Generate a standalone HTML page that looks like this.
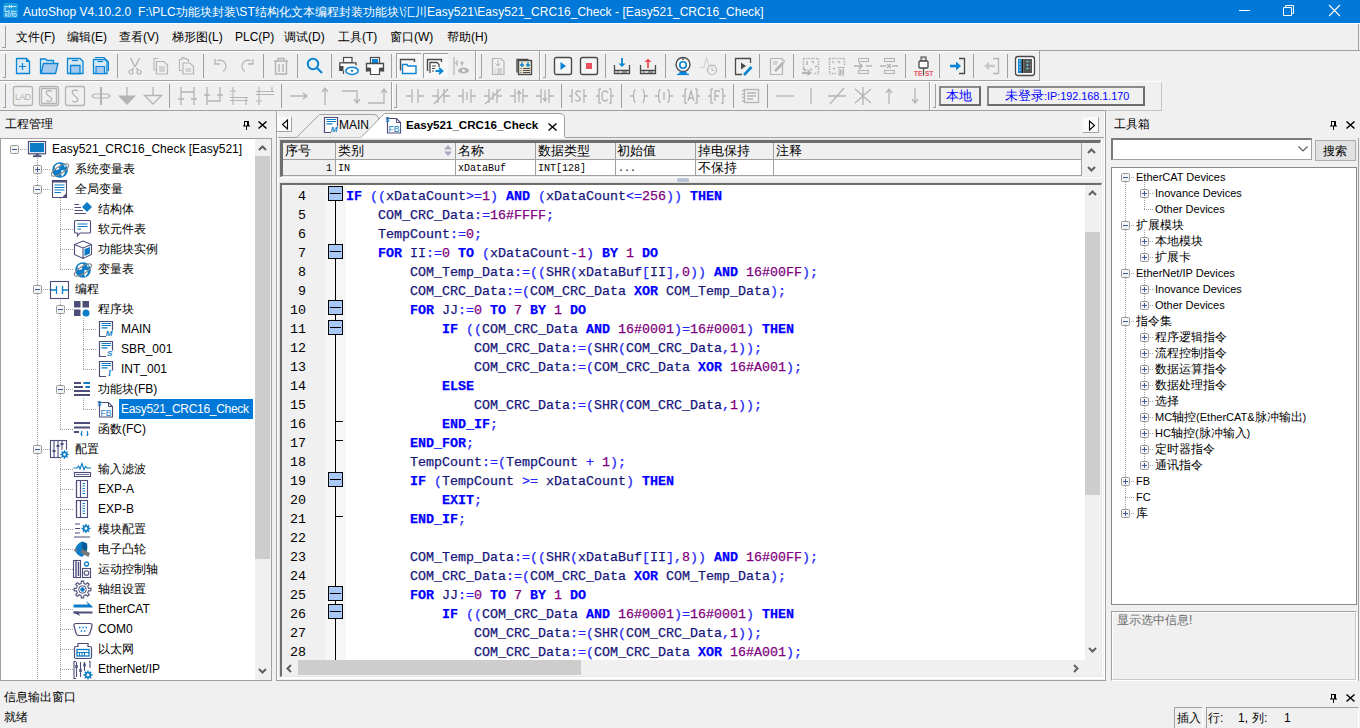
<!DOCTYPE html><html><head><meta charset="utf-8"><style>
*{box-sizing:border-box;margin:0;padding:0}
html,body{width:1360px;height:728px;overflow:hidden;background:#f0f0f0;font-family:"Liberation Sans",sans-serif;font-size:12px;color:#000;position:relative}
.a{position:absolute}
.t{position:absolute;white-space:nowrap;line-height:14px}
.mono{font-family:"Liberation Mono",monospace}
svg{position:absolute;overflow:visible}
</style></head><body><div class="a" style="left:0px;top:0px;width:1360px;height:23px;background:#0078d7"></div><div class="a" style="left:0px;top:23px;width:1360px;height:1px;background:#fff"></div><svg style="left:2px;top:2px" width="17" height="17" viewBox="0 0 17 17"><rect x="1" y="1" width="15" height="15" rx="2.5" fill="#1c9ae0"/><path d="M2.5 4.5H14.5M3 4.5V9.5H6.5M10.5 9.5H14.5M7 8V11M10 8V11M7.5 3V6M9.5 3V6" stroke="#bfe6fa" stroke-width="1" fill="none"/><text x="8.5" y="15" text-anchor="middle" font-size="4.5" font-weight="bold" font-family="Liberation Sans" fill="#d8f0fc">AUTO</text></svg><div class="t" style="left:23px;top:5px;color:#fff;letter-spacing:0.05px">AutoShop V4.10.2.0&nbsp; F:\PLC功能块封装\ST结构化文本编程封装功能块\汇川Easy521\Easy521_CRC16_Check - [Easy521_CRC16_Check]</div><div class="a" style="left:1239px;top:10px;width:11px;height:1px;background:#fff"></div><svg style="left:1283px;top:5px" width="11" height="11"><path d="M0.5 2.5h8v8h-8z M2.5 2.5v-2h8v8h-2" stroke="#fff" fill="none"/></svg><svg style="left:1329px;top:5px" width="11" height="11"><path d="M0 0L11 11M11 0L0 11" stroke="#fff" stroke-width="1.1" fill="none"/></svg><div class="a" style="left:0px;top:50px;width:1360px;height:1px;background:#a0a0a0"></div><div class="a" style="left:1358px;top:24px;width:1px;height:27px;background:#a0a0a0"></div><div class="a" style="left:5px;top:26px;width:1px;height:22px;background:#a0a0a0"></div><div class="a" style="left:2px;top:47px;width:4px;height:1px;background:#a0a0a0"></div><div class="t" style="left:16px;top:30px;">文件(F)</div><div class="t" style="left:67px;top:30px;">编辑(E)</div><div class="t" style="left:119px;top:30px;">查看(V)</div><div class="t" style="left:172px;top:30px;">梯形图(L)</div><div class="t" style="left:235px;top:30px;">PLC(P)</div><div class="t" style="left:284px;top:30px;">调试(D)</div><div class="t" style="left:338px;top:30px;">工具(T)</div><div class="t" style="left:390px;top:30px;">窗口(W)</div><div class="t" style="left:447px;top:30px;">帮助(H)</div><div class="a" style="left:0px;top:51px;width:1040px;height:1px;background:#fff"></div><div class="a" style="left:0px;top:80px;width:1040px;height:1px;background:#a0a0a0"></div><div class="a" style="left:0px;top:81px;width:1162px;height:1px;background:#fff"></div><div class="a" style="left:0px;top:110px;width:1106px;height:1px;background:#a0a0a0"></div><div class="a" style="left:1039px;top:51px;width:1px;height:29px;background:#a0a0a0"></div><div class="a" style="left:475px;top:51px;width:1px;height:29px;background:#a0a0a0"></div><div class="a" style="left:476px;top:51px;width:1px;height:29px;background:#fff"></div><div class="a" style="left:539px;top:51px;width:1px;height:29px;background:#a0a0a0"></div><div class="a" style="left:540px;top:51px;width:1px;height:29px;background:#fff"></div><div class="a" style="left:5px;top:54px;width:1px;height:24px;background:#a0a0a0"></div><div class="a" style="left:3px;top:77px;width:3px;height:1px;background:#a0a0a0"></div><div class="a" style="left:481px;top:54px;width:1px;height:24px;background:#a0a0a0"></div><div class="a" style="left:479px;top:77px;width:3px;height:1px;background:#a0a0a0"></div><div class="a" style="left:545px;top:54px;width:1px;height:24px;background:#a0a0a0"></div><div class="a" style="left:543px;top:77px;width:3px;height:1px;background:#a0a0a0"></div><div class="a" style="left:117px;top:54px;width:1px;height:24px;background:#a0a0a0"></div><div class="a" style="left:203px;top:54px;width:1px;height:24px;background:#a0a0a0"></div><div class="a" style="left:263px;top:54px;width:1px;height:24px;background:#a0a0a0"></div><div class="a" style="left:297px;top:54px;width:1px;height:24px;background:#a0a0a0"></div><div class="a" style="left:331px;top:54px;width:1px;height:24px;background:#a0a0a0"></div><div class="a" style="left:391px;top:54px;width:1px;height:24px;background:#a0a0a0"></div><div class="a" style="left:605px;top:54px;width:1px;height:24px;background:#a0a0a0"></div><div class="a" style="left:665px;top:54px;width:1px;height:24px;background:#a0a0a0"></div><div class="a" style="left:725px;top:54px;width:1px;height:24px;background:#a0a0a0"></div><div class="a" style="left:759px;top:54px;width:1px;height:24px;background:#a0a0a0"></div><div class="a" style="left:793px;top:54px;width:1px;height:24px;background:#a0a0a0"></div><div class="a" style="left:905px;top:54px;width:1px;height:24px;background:#a0a0a0"></div><div class="a" style="left:939px;top:54px;width:1px;height:24px;background:#a0a0a0"></div><div class="a" style="left:973px;top:54px;width:1px;height:24px;background:#a0a0a0"></div><div class="a" style="left:1007px;top:54px;width:1px;height:24px;background:#a0a0a0"></div><div class="a" style="left:929px;top:82px;width:1px;height:28px;background:#a0a0a0"></div><div class="a" style="left:930px;top:82px;width:1px;height:28px;background:#fff"></div><div class="a" style="left:391px;top:82px;width:1px;height:28px;background:#a0a0a0"></div><div class="a" style="left:392px;top:82px;width:1px;height:28px;background:#fff"></div><div class="a" style="left:1161px;top:81px;width:1px;height:30px;background:#c4c4c4"></div><div class="a" style="left:1106px;top:110px;width:56px;height:1px;background:#c4c4c4"></div><div class="a" style="left:5px;top:84px;width:1px;height:24px;background:#a0a0a0"></div><div class="a" style="left:3px;top:107px;width:3px;height:1px;background:#a0a0a0"></div><div class="a" style="left:396px;top:84px;width:1px;height:24px;background:#a0a0a0"></div><div class="a" style="left:394px;top:107px;width:3px;height:1px;background:#a0a0a0"></div><div class="a" style="left:935px;top:84px;width:1px;height:24px;background:#a0a0a0"></div><div class="a" style="left:933px;top:107px;width:3px;height:1px;background:#a0a0a0"></div><div class="a" style="left:169px;top:84px;width:1px;height:24px;background:#a0a0a0"></div><div class="a" style="left:281px;top:84px;width:1px;height:24px;background:#a0a0a0"></div><div class="a" style="left:561px;top:84px;width:1px;height:24px;background:#a0a0a0"></div><div class="a" style="left:621px;top:84px;width:1px;height:24px;background:#a0a0a0"></div><div class="a" style="left:733px;top:84px;width:1px;height:24px;background:#a0a0a0"></div><div class="a" style="left:767px;top:84px;width:1px;height:24px;background:#a0a0a0"></div><svg style="left:13px;top:56px" width="20" height="20" viewBox="0 0 20 20"><path d="M3.5 2.5H13.5L16.5 5.5V17.5H3.5Z" fill="#d8e9f6" stroke="#0a84d4" stroke-width="1.3"/><path d="M13 2.5L16.5 6H13Z" fill="#0a84d4"/><path d="M6 10.5H13M9.5 7V14" stroke="#0a84d4" stroke-width="1.2"/></svg><svg style="left:39px;top:56px" width="20" height="20" viewBox="0 0 20 20"><path d="M1.5 17.5V3H6.5L8 4.5H14.5V7" fill="#d8e9f6" stroke="#0a84d4" stroke-width="1.3"/><path d="M2 17.5L4.5 7.5H19L16.5 17.5Z" fill="#a3c9ef" stroke="#0a84d4" stroke-width="1.3"/></svg><svg style="left:65px;top:56px" width="20" height="20" viewBox="0 0 20 20"><path d="M2.5 2.5H15L18 5.5V17.5H2.5Z" fill="#d8e9f6" stroke="#0a84d4" stroke-width="1.3"/><path d="M5.5 9.5H15V17.5H5.5Z" fill="#a3c9ef" stroke="#0a84d4" stroke-width="1.3"/><path d="M7 4.5H13" stroke="#0a84d4" stroke-width="1.2"/></svg><svg style="left:91px;top:56px" width="20" height="20" viewBox="0 0 20 20"><path d="M4 1.5H13L17.5 6V15" fill="none" stroke="#0a84d4" stroke-width="1.1"/><path d="M2.5 3.5H14L16 5.5V17.5H2.5Z" fill="#d8e9f6" stroke="#0a84d4" stroke-width="1.3"/><path d="M5 10.5H13.5V17.5H5Z" fill="#a3c9ef" stroke="#0a84d4" stroke-width="1.2"/><path d="M6.5 5.5H12" stroke="#0a84d4" stroke-width="1.2"/></svg><svg style="left:125px;top:56px" width="20" height="20" viewBox="0 0 20 20"><path d="M5.5 2L10 11M14.5 2L10 11M8.5 12L7 14M11.5 12L13 14" stroke="#b4b4b4" stroke-width="1.4" fill="none"/><circle cx="6" cy="16" r="2" fill="none" stroke="#b4b4b4" stroke-width="1.2"/><circle cx="14" cy="16" r="2" fill="none" stroke="#b4b4b4" stroke-width="1.2"/></svg><svg style="left:151px;top:56px" width="20" height="20" viewBox="0 0 20 20"><path d="M7 2.5H3V14H5" fill="none" stroke="#b4b4b4" stroke-width="1.1"/><path d="M5.5 5.5H13L16.5 9V18H5.5Z" fill="none" stroke="#b4b4b4" stroke-width="1.2"/><path d="M8 11H14M8 13H14M8 15H14" stroke="#b4b4b4"/></svg><svg style="left:177px;top:56px" width="20" height="20" viewBox="0 0 20 20"><path d="M9 3.5V2.5H7V1.5H5V3.5H2.5V14.5H5M9 3.5H11.5V6" fill="none" stroke="#b4b4b4" stroke-width="1.1"/><path d="M6 7H13L16.5 10.5V18H6Z" fill="none" stroke="#b4b4b4" stroke-width="1.2"/><path d="M8.5 13H14M8.5 15H14" stroke="#b4b4b4"/></svg><svg style="left:211px;top:56px" width="20" height="20" viewBox="0 0 20 20"><path d="M6 5A5 5 0 1 1 12 15.5" fill="none" stroke="#b4b4b4" stroke-width="1.3"/><path d="M4 3V8H9" fill="none" stroke="#b4b4b4" stroke-width="1.3"/></svg><svg style="left:237px;top:56px" width="20" height="20" viewBox="0 0 20 20"><path d="M14 5A5 5 0 1 0 8 15.5" fill="none" stroke="#b4b4b4" stroke-width="1.3"/><path d="M16 3V8H11" fill="none" stroke="#b4b4b4" stroke-width="1.3"/></svg><svg style="left:271px;top:56px" width="20" height="20" viewBox="0 0 20 20"><path d="M3 5H17M7 5V2.5H13V5M4.5 5.5V18H15.5V5.5M8 8V16M12 8V16" fill="none" stroke="#b4b4b4" stroke-width="1.4"/></svg><svg style="left:305px;top:56px" width="20" height="20" viewBox="0 0 20 20"><circle cx="8" cy="8" r="5.2" fill="none" stroke="#0a84d4" stroke-width="2"/><path d="M11.8 11.8L17 17" stroke="#0a84d4" stroke-width="2.2"/></svg><svg style="left:339px;top:56px" width="20" height="20" viewBox="0 0 20 20"><rect x="4.5" y="1.5" width="8.5" height="5" fill="#fff" stroke="#4a4a4a" stroke-width="1.2"/><path d="M0.8 15V6.8H17V9.5" fill="#fff" stroke="#4a4a4a" stroke-width="1.3"/><rect x="0.5" y="10" width="4" height="5" fill="#4a4a4a"/><path d="M4.5 15V18" stroke="#4a4a4a" stroke-width="1.2"/><ellipse cx="13" cy="14.8" rx="6.2" ry="3.6" fill="#fff" stroke="#0a84d4" stroke-width="1.5"/><rect x="12" y="13.8" width="2" height="2" fill="#0a84d4"/></svg><svg style="left:365px;top:56px" width="20" height="20" viewBox="0 0 20 20"><rect x="5.5" y="1.5" width="9" height="6" fill="#fff" stroke="#4a4a4a" stroke-width="1.2"/><rect x="7" y="3" width="6" height="4.5" fill="#0a84d4"/><path d="M1.5 15.5V7.5H18.5V15.5" fill="#fff" stroke="#4a4a4a" stroke-width="1.3"/><rect x="1" y="11.5" width="4" height="4" fill="#4a4a4a"/><rect x="15" y="11.5" width="4" height="4" fill="#4a4a4a"/><path d="M5.5 12V18.5H14.5V12" fill="#fff" stroke="#4a4a4a" stroke-width="1.2"/></svg><svg style="left:451px;top:56px" width="20" height="20" viewBox="0 0 20 20"><path d="M3 1V19M3 7H6M6 4V10M11 5V10M9 7H13" stroke="#b4b4b4" stroke-width="1.2" fill="none"/><ellipse cx="12.5" cy="14.5" rx="5.5" ry="3" fill="#b4b4b4"/><circle cx="12.5" cy="14.5" r="1.5" fill="#f0f0f0"/></svg><svg style="left:488px;top:56px" width="20" height="20" viewBox="0 0 20 20"><path d="M4.5 2.5H13L16 5.5V18.5H4.5Z" fill="none" stroke="#b4b4b4" stroke-width="1.2"/><path d="M10 4V10M7.5 7.5L10 10L12.5 7.5M6.5 13H7.5M9 13H14M6.5 15H7.5M9 15H14M6.5 17H7.5M9 17H14" fill="none" stroke="#b4b4b4"/></svg><svg style="left:514px;top:56px" width="20" height="20" viewBox="0 0 20 20"><path d="M3 16.5V3.5H14.5" fill="none" stroke="#4a4a4a" stroke-width="1.4"/><rect x="4.5" y="4.5" width="13" height="14" fill="#efe7cf" stroke="#4a4a4a" stroke-width="1.4"/><path d="M8 6V10M6.3 8.5L8 10.3L9.7 8.5M14 6V10M12.3 8.5L14 10.3L15.7 8.5" fill="none" stroke="#0a84d4" stroke-width="1.3"/><path d="M6.5 12.5H7.5M9 12.5H16M6.5 14.5H7.5M9 14.5H16M6.5 16.5H7.5M9 16.5H16" stroke="#4a4a4a"/></svg><svg style="left:553px;top:56px" width="20" height="20" viewBox="0 0 20 20"><rect x="1.5" y="1.5" width="17" height="17" rx="2" fill="#f6f6f6" stroke="#4a4a4a" stroke-width="1.4"/><path d="M7.5 6L13 10L7.5 14Z" fill="#0a84d4"/></svg><svg style="left:579px;top:56px" width="20" height="20" viewBox="0 0 20 20"><rect x="1.5" y="1.5" width="17" height="17" rx="2" fill="#f6f6f6" stroke="#4a4a4a" stroke-width="1.4"/><rect x="7" y="7" width="6" height="6" fill="#e8505b"/></svg><svg style="left:612px;top:56px" width="20" height="20" viewBox="0 0 20 20"><path d="M2.5 9V17.5H17.5V9M3 14.5H17" fill="none" stroke="#4a4a4a" stroke-width="1.3"/><path d="M5 16H6.5M10 16H15" stroke="#4a4a4a"/><path d="M10 2V9" stroke="#0a84d4" stroke-width="1.8"/><path d="M6.5 7.5L10 11L13.5 7.5Z" fill="#0a84d4"/></svg><svg style="left:638px;top:56px" width="20" height="20" viewBox="0 0 20 20"><path d="M2.5 9V17.5H17.5V9M3 14.5H17" fill="none" stroke="#4a4a4a" stroke-width="1.3"/><path d="M5 16H6.5M10 16H15" stroke="#4a4a4a"/><path d="M10 5V12" stroke="#e8505b" stroke-width="1.8"/><path d="M6.5 6L10 2.5L13.5 6Z" fill="#e8505b"/></svg><svg style="left:673px;top:56px" width="20" height="20" viewBox="0 0 20 20"><circle cx="10" cy="8.5" r="7" fill="#f6f6f6" stroke="#4a4a4a" stroke-width="1.4"/><circle cx="10" cy="9" r="3.2" fill="none" stroke="#0a84d4" stroke-width="1.6"/><circle cx="10" cy="3.2" r="0.9" fill="#4a4a4a"/><path d="M7 15.5L5.5 18H14.5L13 15.5Z" fill="#0a84d4"/><path d="M4 18.5H16" stroke="#0a84d4" stroke-width="1.2"/></svg><svg style="left:699px;top:56px" width="20" height="20" viewBox="0 0 20 20"><path d="M1 12L5 11L7.5 2L9.5 9H17" fill="none" stroke="#cfcfcf" stroke-width="1.1"/><circle cx="13" cy="14" r="4.5" fill="#f0f0f0" stroke="#b4b4b4" stroke-width="1.2"/><path d="M13 11.5V14.5H15" fill="none" stroke="#b4b4b4"/></svg><svg style="left:733px;top:56px" width="20" height="20" viewBox="0 0 20 20"><path d="M17.5 7V2.5H2.5V18.5H9" fill="none" stroke="#4a4a4a" stroke-width="1.3"/><path d="M8 6.5L13 10L8 13.5Z" fill="#4a4a4a"/><path d="M11 19L18.5 11" stroke="#0a84d4" stroke-width="2.6"/></svg><svg style="left:767px;top:56px" width="20" height="20" viewBox="0 0 20 20"><path d="M15 2.5H3.5V18.5H15.5V8" fill="none" stroke="#b4b4b4" stroke-width="1.2"/><path d="M6 6H11M6 8H10" stroke="#b4b4b4"/><path d="M8 15L16.5 6.5" stroke="#b4b4b4" stroke-width="2.6"/><path d="M14 2L18 6" stroke="#b4b4b4" stroke-width="1.2"/></svg><svg style="left:801px;top:56px" width="20" height="20" viewBox="0 0 20 20"><path d="M2.5 2.5H17.5V17.5H12M2.5 2.5V12" fill="none" stroke="#b4b4b4" stroke-width="1.6" stroke-dasharray="1.5 1"/><path d="M5 6H7M5 8H7M11 5L13 7M14 11L16 10M9 13L11 14" stroke="#b4b4b4" stroke-width="1.5"/><path d="M1 17H9" stroke="#b4b4b4" stroke-width="2.2"/><path d="M6.5 13L11 17L6.5 20Z" fill="#b4b4b4"/><path d="M2 12L5 15" stroke="#b4b4b4" stroke-width="2"/></svg><svg style="left:827px;top:56px" width="20" height="20" viewBox="0 0 20 20"><path d="M2.5 2.5H17.5V10M2.5 2.5V17.5H9" fill="none" stroke="#b4b4b4" stroke-width="1.6" stroke-dasharray="1.5 1"/><path d="M5 6H7M11 5L13 7M6 12L8 13" stroke="#b4b4b4" stroke-width="1.5"/><path d="M10.5 11.5H18M12 12.5V19H16.5V12.5M13.5 13.5V18M15 13.5V18" fill="none" stroke="#b4b4b4" stroke-width="1.1"/></svg><svg style="left:853px;top:56px" width="20" height="20" viewBox="0 0 20 20"><rect x="5.5" y="2.5" width="10" height="3" fill="none" stroke="#b4b4b4" stroke-width="1.1"/><rect x="5.5" y="14.5" width="10" height="3" fill="none" stroke="#b4b4b4" stroke-width="1.1"/><path d="M1 10H9M13 10H19M6 7L9 10L6 13" fill="none" stroke="#b4b4b4" stroke-width="1.6"/></svg><svg style="left:879px;top:56px" width="20" height="20" viewBox="0 0 20 20"><rect x="5.5" y="2.5" width="10" height="3" fill="none" stroke="#b4b4b4" stroke-width="1.1"/><rect x="5.5" y="14.5" width="10" height="3" fill="none" stroke="#b4b4b4" stroke-width="1.1"/><path d="M1 10H7M13 10H19M8 8L12 12M12 8L8 12" fill="none" stroke="#b4b4b4" stroke-width="1.4"/></svg><svg style="left:914px;top:56px" width="20" height="20" viewBox="0 0 20 20"><rect x="7" y="1" width="5" height="4" fill="none" stroke="#4a4a4a" stroke-width="1.1"/><path d="M8.5 2.5H9M10 2.5H10.5" stroke="#4a4a4a"/><rect x="5" y="5" width="9" height="7" rx="1" fill="#fff" stroke="#4a4a4a" stroke-width="1.3"/><path d="M9.5 12V19.5" stroke="#4a4a4a" stroke-width="1.2"/><text x="0" y="19.5" font-size="6.5" font-family="Liberation Sans" font-weight="bold" fill="#e8505b">TE</text><text x="11" y="19.5" font-size="6.5" font-family="Liberation Sans" font-weight="bold" fill="#e8505b">ST</text></svg><svg style="left:948px;top:56px" width="20" height="20" viewBox="0 0 20 20"><path d="M11 2.5H16.5V17.5H11" fill="none" stroke="#4a4a4a" stroke-width="1.3"/><path d="M2 10H9" stroke="#0a84d4" stroke-width="2.6"/><path d="M8 5.5L13 10L8 14.5Z" fill="#0a84d4"/></svg><svg style="left:982px;top:56px" width="20" height="20" viewBox="0 0 20 20"><path d="M11 2.5H16.5V17.5H11" fill="none" stroke="#b4b4b4" stroke-width="1.3"/><path d="M6 10H13" stroke="#c8c8c8" stroke-width="2.6"/><path d="M7 5.5L2 10L7 14.5Z" fill="#c8c8c8"/></svg><svg style="left:1015px;top:56px" width="20" height="20" viewBox="0 0 20 20"><rect x="0.5" y="0.5" width="19" height="19" rx="2.5" fill="#f8f8f8" stroke="#4a4a4a" stroke-width="1.3"/><rect x="3" y="3" width="3.5" height="14" fill="#0a84d4"/><rect x="6.5" y="3" width="2" height="14" fill="#1a1a1a"/><rect x="8.5" y="3" width="8.5" height="14" fill="#555"/><path d="M4 5H5.5M4 8H5.5M4 11H5.5M4 14H5.5" stroke="#cfe8f8" stroke-width="1"/><circle cx="12.5" cy="5.5" r="1" fill="#5fd0e0"/><circle cx="12.5" cy="9" r="1" fill="#5fd0e0"/><circle cx="12.5" cy="12.5" r="1" fill="#5fd0e0"/><path d="M15 5.5H16M15 9H16M15 12.5H16" stroke="#999"/></svg><div class="a" style="left:396px;top:53px;width:25px;height:25px;background:#f7f7f7;border-top:1px solid #a0a0a0;border-left:1px solid #a0a0a0"></div><svg style="left:398px;top:56px" width="20" height="20" viewBox="0 0 20 20"><path d="M2.5 14.5V3.5H16.5V6" fill="none" stroke="#4a4a4a" stroke-width="1.4"/><path d="M4.5 17.5V8.5H9L10 10H18V17.5Z" fill="#fff" stroke="#0a84d4" stroke-width="1.4"/></svg><div class="a" style="left:423px;top:53px;width:25px;height:25px;background:#f7f7f7;border-top:1px solid #a0a0a0;border-left:1px solid #a0a0a0"></div><svg style="left:425px;top:56px" width="20" height="20" viewBox="0 0 20 20"><path d="M2.5 15V3.5H16.5V6" fill="none" stroke="#4a4a4a" stroke-width="1.4"/><path d="M5 17V6.5H12L14 8.5V11" fill="#fff" stroke="#4a4a4a" stroke-width="1.3"/><path d="M7 10H11M7 12.5H10M7 15H9" stroke="#4a4a4a"/><path d="M10.5 15H16M14 12L17.5 15L14 18" fill="none" stroke="#0a84d4" stroke-width="1.8"/></svg><svg style="left:13px;top:86px" width="20" height="20" viewBox="0 0 20 20"><rect x="0.5" y="0.5" width="19" height="19" rx="2" stroke="#b4b4b4" stroke-width="1.3" fill="none"/><text x="10" y="14" text-anchor="middle" font-size="9" font-family="Liberation Sans" fill="#b4b4b4" textLength="16">LAD</text></svg><svg style="left:39px;top:86px" width="20" height="20" viewBox="0 0 20 20"><rect x="0.5" y="0.5" width="19" height="19" rx="2" stroke="#b4b4b4" stroke-width="1.3" fill="none"/><rect x="2.5" y="2.5" width="15" height="15" rx="1" stroke="#b4b4b4" stroke-width="1.3" fill="none"/><path d="M13 5.5Q10 3.5 7.5 5.5Q6.5 7.5 10 10Q13.5 12.5 12.5 14.5Q10 16.5 7 14.5" stroke="#b4b4b4" stroke-width="1.3" fill="none"/></svg><svg style="left:65px;top:86px" width="20" height="20" viewBox="0 0 20 20"><rect x="0.5" y="0.5" width="19" height="19" rx="2" stroke="#b4b4b4" stroke-width="1.3" fill="none"/><path d="M13 5Q10 3 7.5 5Q6.5 7.5 10 10Q13.5 12.5 12.5 15Q10 17 7 15" stroke="#b4b4b4" stroke-width="1.3" fill="none"/></svg><svg style="left:91px;top:86px" width="20" height="20" viewBox="0 0 20 20"><path d="M10 1V19" stroke="#b4b4b4" stroke-width="2"/><path d="M1 10L3 8H17L19 10L17 12H3Z" fill="#f0f0f0" stroke="#b4b4b4" stroke-width="1.2"/><path d="M10 7V13" stroke="#b4b4b4" stroke-width="2"/></svg><svg style="left:117px;top:86px" width="20" height="20" viewBox="0 0 20 20"><path d="M10 1V10" stroke="#b4b4b4" stroke-width="1.3" fill="none"/><path d="M1 9.5H19L10 19Z" fill="#b4b4b4"/></svg><svg style="left:143px;top:86px" width="20" height="20" viewBox="0 0 20 20"><path d="M10 1V9" stroke="#b4b4b4" stroke-width="1.3" fill="none"/><path d="M1.5 9.5H18.5L10 18Z" stroke="#b4b4b4" stroke-width="1.3" fill="none"/></svg><svg style="left:177px;top:86px" width="20" height="20" viewBox="0 0 20 20"><path d="M4 1V19M17 1V19M4 6H17V19M1 13H7M14 13H20" stroke="#b4b4b4" stroke-width="1.3" fill="none"/></svg><svg style="left:203px;top:86px" width="20" height="20" viewBox="0 0 20 20"><path d="M4 1V19M17 1V15H4M1 9H7M14 9H20" stroke="#b4b4b4" stroke-width="1.3" fill="none"/></svg><svg style="left:229px;top:86px" width="20" height="20" viewBox="0 0 20 20"><path d="M4 1V19M17 12V19M1 5H7M1 11.5H19M1 14.5H19M1 8.5H2" stroke="#b4b4b4" stroke-width="1.1" fill="none"/></svg><svg style="left:255px;top:86px" width="20" height="20" viewBox="0 0 20 20"><path d="M4 1V19M17 1V6M1 5.5H19M1 8.5H19M1 15H7" stroke="#b4b4b4" stroke-width="1.1" fill="none"/></svg><svg style="left:289px;top:86px" width="20" height="20" viewBox="0 0 20 20"><path d="M1 10H18M14 7L18 10L14 13" stroke="#b4b4b4" stroke-width="1.3" fill="none"/></svg><svg style="left:315px;top:86px" width="20" height="20" viewBox="0 0 20 20"><path d="M10 19V2M7 6L10 2L13 6" stroke="#b4b4b4" stroke-width="1.3" fill="none"/></svg><svg style="left:341px;top:86px" width="20" height="20" viewBox="0 0 20 20"><path d="M1 5H16V16M13 13L16 17L19 13" stroke="#b4b4b4" stroke-width="1.3" fill="none"/></svg><svg style="left:367px;top:86px" width="20" height="20" viewBox="0 0 20 20"><path d="M1 17H17V4M14 7L17 3L20 7" stroke="#b4b4b4" stroke-width="1.3" fill="none"/></svg><svg style="left:405px;top:86px" width="20" height="20" viewBox="0 0 20 20"><path d="M1 10H7M7 3V17M13 3V17M13 10H19" stroke="#b4b4b4" stroke-width="1.3" fill="none"/></svg><svg style="left:431px;top:86px" width="20" height="20" viewBox="0 0 20 20"><path d="M1 10H7M7 3V17M13 3V17M13 10H19M3 18L17 3" stroke="#b4b4b4" stroke-width="1.3" fill="none"/></svg><svg style="left:457px;top:86px" width="20" height="20" viewBox="0 0 20 20"><path d="M1 10H6M6 3V17M14 3V17M14 10H19M10 6V14" stroke="#b4b4b4" stroke-width="1.3" fill="none"/></svg><svg style="left:483px;top:86px" width="20" height="20" viewBox="0 0 20 20"><path d="M1 10H6M6 3V17M14 3V17M14 10H19M10 6V14M2 18L18 3" stroke="#b4b4b4" stroke-width="1.3" fill="none"/></svg><svg style="left:509px;top:86px" width="20" height="20" viewBox="0 0 20 20"><path d="M1 10H6M6 3V17M14 3V17M14 10H19M10 16V5M8 8L10 5L12 8" stroke="#b4b4b4" stroke-width="1.3" fill="none"/></svg><svg style="left:535px;top:86px" width="20" height="20" viewBox="0 0 20 20"><path d="M1 10H6M6 3V17M14 3V17M14 10H19M10 4V15M8 12L10 15L12 12" stroke="#b4b4b4" stroke-width="1.3" fill="none"/></svg><svg style="left:568px;top:86px" width="20" height="20" viewBox="0 0 20 20"><path d="M1 10H4M4 3V17M16 3V17M16 10H19M13 6Q10 4 8 6Q7 8 10 10Q13 12 12 14Q10 16 7 14" stroke="#b4b4b4" stroke-width="1.3" fill="none"/></svg><svg style="left:595px;top:86px" width="20" height="20" viewBox="0 0 20 20"><path d="M1 10H4M4 3H6M4 3V17H6M16 3H14M16 3V17H14M16 10H19M13 7Q12 5 10 5Q7 5 7 10Q7 15 10 15Q12 15 13 13" stroke="#b4b4b4" stroke-width="1.3" fill="none"/></svg><svg style="left:629px;top:86px" width="20" height="20" viewBox="0 0 20 20"><path d="M1 10H4M6 3Q3 10 6 17M14 3Q17 10 14 17M16 10H19" stroke="#b4b4b4" stroke-width="1.3" fill="none"/></svg><svg style="left:654px;top:86px" width="20" height="20" viewBox="0 0 20 20"><path d="M1 10H4M6 3Q3 10 6 17M14 3Q17 10 14 17M16 10H19M10 6V14" stroke="#b4b4b4" stroke-width="1.3" fill="none"/></svg><svg style="left:681px;top:86px" width="20" height="20" viewBox="0 0 20 20"><path d="M1 10H4M4 3H6M4 3V17H6M16 3H14M16 3V17H14M16 10H19M7 15L10 5L13 15M8 12H12" stroke="#b4b4b4" stroke-width="1.3" fill="none"/></svg><svg style="left:707px;top:86px" width="20" height="20" viewBox="0 0 20 20"><path d="M1 10H4M4 3H6M4 3V17H6M16 3H14M16 3V17H14M16 10H19M8 15V5H13M8 10H12" stroke="#b4b4b4" stroke-width="1.3" fill="none"/></svg><svg style="left:740px;top:86px" width="20" height="20" viewBox="0 0 20 20"><path d="M2 4.5H4M2 8H4M2 11.5H4M2 15H4" stroke="#b4b4b4" stroke-width="1.3" fill="none"/><rect x="4.5" y="3.5" width="14" height="13" stroke="#b4b4b4" stroke-width="1.3" fill="none"/><path d="M7 7H16M7 10H16M7 13H13" stroke="#b4b4b4" stroke-width="1.3" fill="none"/></svg><svg style="left:775px;top:86px" width="20" height="20" viewBox="0 0 20 20"><path d="M1 10H19" stroke="#b4b4b4" stroke-width="1.3" fill="none"/></svg><svg style="left:801px;top:86px" width="20" height="20" viewBox="0 0 20 20"><path d="M10 2V18" stroke="#b4b4b4" stroke-width="1.3" fill="none"/></svg><svg style="left:827px;top:86px" width="20" height="20" viewBox="0 0 20 20"><path d="M1 10H19M3 18L17 2" stroke="#b4b4b4" stroke-width="1.3" fill="none"/></svg><svg style="left:853px;top:86px" width="20" height="20" viewBox="0 0 20 20"><path d="M10 1V19M2 3L18 17M18 3L2 17" stroke="#b4b4b4" stroke-width="1.3" fill="none"/></svg><svg style="left:879px;top:86px" width="20" height="20" viewBox="0 0 20 20"><path d="M10 18V3M7 7L10 3L13 7" stroke="#b4b4b4" stroke-width="1.3" fill="none"/></svg><svg style="left:905px;top:86px" width="20" height="20" viewBox="0 0 20 20"><path d="M10 2V17M7 13L10 17L13 13" stroke="#b4b4b4" stroke-width="1.3" fill="none"/></svg><div class="a" style="left:930px;top:81px;width:232px;height:1px;background:#fff"></div><div class="a" style="left:939px;top:86px;width:42px;height:20px;border:2px solid #6b6b6b;border-top-color:#8a8a8a;border-left-color:#8a8a8a;background:#f0f0f0"></div><div class="t" style="left:946px;top:89px;color:#0000ff;font-size:13px">本地</div><div class="a" style="left:987px;top:86px;width:158px;height:20px;border:2px solid #6b6b6b;border-top-color:#8a8a8a;border-left-color:#8a8a8a;background:#f0f0f0"></div><div class="t" style="left:1005px;top:89px;color:#0000ff;font-size:13px">未登录<span style="font-size:10.8px">:IP:192.168.1.170</span></div><div class="t" style="left:5px;top:117px;">工程管理</div><svg style="left:242px;top:121px" width="9" height="9" viewBox="0 0 9 9"><path d="M2 0.5H7M2.5 0.5V5M6.5 0.5V5M5.5 0.5V5M1 5H8M4.5 5V9" stroke="#000" stroke-width="1" fill="none"/></svg><svg style="left:258px;top:121px" width="9" height="8" viewBox="0 0 9 8"><path d="M0.5 0.5L8.5 7.5M8.5 0.5L0.5 7.5" stroke="#000" stroke-width="1.5" fill="none"/></svg><div class="a" style="left:0px;top:138px;width:272px;height:543px;border:1px solid #a0a0a0;background:#fff"></div><div class="a" style="left:255px;top:139px;width:16px;height:541px;background:#f0f0f0"></div><div class="a" style="left:255px;top:156px;width:15px;height:403px;background:#cdcdcd"></div><svg style="left:258px;top:145px" width="9" height="6" viewBox="0 0 9 6"><path d="M1 5L4.5 1.5L8 5" stroke="#606060" stroke-width="2" fill="none"/></svg><svg style="left:258px;top:668px" width="9" height="6" viewBox="0 0 9 6"><path d="M1 1L4.5 4.5L8 1" stroke="#606060" stroke-width="2" fill="none"/></svg><div class="a" style="left:276px;top:111px;width:1px;height:570px;background:#a0a0a0"></div><div class="a" style="left:277px;top:111px;width:1px;height:570px;background:#fff"></div><div class="a" style="left:1px;top:139px;width:254px;height:541px;overflow:hidden"><div class="a" style="left:36px;top:19px;width:1px;height:522px;background:repeating-linear-gradient(to bottom,#a0a0a0 0 1px,transparent 1px 2px)"></div><div class="a" style="left:59px;top:59px;width:1px;height:72px;background:repeating-linear-gradient(to bottom,#a0a0a0 0 1px,transparent 1px 2px)"></div><div class="a" style="left:59px;top:159px;width:1px;height:132px;background:repeating-linear-gradient(to bottom,#a0a0a0 0 1px,transparent 1px 2px)"></div><div class="a" style="left:82px;top:179px;width:1px;height:52px;background:repeating-linear-gradient(to bottom,#a0a0a0 0 1px,transparent 1px 2px)"></div><div class="a" style="left:82px;top:259px;width:1px;height:12px;background:repeating-linear-gradient(to bottom,#a0a0a0 0 1px,transparent 1px 2px)"></div><div class="a" style="left:59px;top:319px;width:1px;height:222px;background:repeating-linear-gradient(to bottom,#a0a0a0 0 1px,transparent 1px 2px)"></div><div class="a" style="left:13px;top:10px;width:14px;height:1px;background:repeating-linear-gradient(to right,#a0a0a0 0 1px,transparent 1px 2px)"></div><svg style="left:9px;top:6px" width="9" height="9" viewBox="0 0 9 9"><rect x="0.5" y="0.5" width="8" height="8" rx="1" fill="#f4f4f4" stroke="#9a9a9a"/><path d="M2 4.5H7" stroke="#3c5a9a" stroke-width="1"/></svg><svg style="left:26px;top:1px" width="20" height="20" viewBox="0 0 20 20"><rect x="1.5" y="1.5" width="17" height="12.3" fill="#fff" stroke="#4d4d7a" stroke-width="1.2"/><rect x="3" y="3" width="14" height="9.2" fill="#0b7cc5"/><rect x="8.5" y="14" width="3.5" height="1.5" fill="#4d4d7a"/><rect x="6" y="15.3" width="8.5" height="1.8" fill="#4d4d7a"/></svg><div class="t" style="left:51px;top:3px;">Easy521_CRC16_Check [Easy521]</div><div class="a" style="left:36px;top:30px;width:14px;height:1px;background:repeating-linear-gradient(to right,#a0a0a0 0 1px,transparent 1px 2px)"></div><svg style="left:32px;top:26px" width="9" height="9" viewBox="0 0 9 9"><rect x="0.5" y="0.5" width="8" height="8" rx="1" fill="#f4f4f4" stroke="#9a9a9a"/><path d="M2 4.5H7M4.5 2V7" stroke="#3c5a9a" stroke-width="1"/></svg><svg style="left:49px;top:21px" width="20" height="20" viewBox="0 0 20 20"><circle cx="10" cy="10" r="7.8" fill="#0b7cc5"/><path d="M5 6Q7 3.5 10 3.8L11 5.5L8.5 7.5L9.5 9L6.5 10L4.5 8.5Z M11.5 10L15 10.5L14.5 13.5L12 17L11 13.5Z M13.5 4.5L16 6L15 7.5Z" fill="#fff"/><ellipse cx="10" cy="10" rx="10" ry="3.6" transform="rotate(-33 10 10)" fill="none" stroke="#8a8a8a" stroke-width="1.2"/></svg><div class="t" style="left:74px;top:23px;">系统变量表</div><div class="a" style="left:36px;top:50px;width:14px;height:1px;background:repeating-linear-gradient(to right,#a0a0a0 0 1px,transparent 1px 2px)"></div><svg style="left:32px;top:46px" width="9" height="9" viewBox="0 0 9 9"><rect x="0.5" y="0.5" width="8" height="8" rx="1" fill="#f4f4f4" stroke="#9a9a9a"/><path d="M2 4.5H7" stroke="#3c5a9a" stroke-width="1"/></svg><svg style="left:49px;top:41px" width="20" height="20" viewBox="0 0 20 20"><path d="M2.5 0.5H16.5V17.5H2.5Z" fill="#fff" stroke="#4d4d7a" stroke-width="1.1"/><rect x="2.5" y="0.5" width="14" height="2" fill="#4d4d7a"/><path d="M4.5 5H14.5M4.5 7.5H14.5M4.5 10H14.5M4.5 12.5H11" stroke="#0b7cc5" stroke-width="1.2"/><path d="M12.5 17L16.5 13V17Z" fill="#4d4d7a"/></svg><div class="t" style="left:74px;top:43px;">全局变量</div><div class="a" style="left:59px;top:70px;width:14px;height:1px;background:repeating-linear-gradient(to right,#a0a0a0 0 1px,transparent 1px 2px)"></div><svg style="left:72px;top:61px" width="20" height="20" viewBox="0 0 20 20"><path d="M1.5 4.5H6M1.5 7.5H8M1.5 10.5H10M1.5 13.5H13" stroke="#4d4d7a" stroke-width="1.1"/><path d="M14 2L19 7L14 12L9 7Z" fill="#0b7cc5"/></svg><div class="t" style="left:97px;top:63px;">结构体</div><div class="a" style="left:59px;top:90px;width:14px;height:1px;background:repeating-linear-gradient(to right,#a0a0a0 0 1px,transparent 1px 2px)"></div><svg style="left:72px;top:81px" width="20" height="20" viewBox="0 0 20 20"><path d="M2.5 0.5H16.5Q17.5 0.5 17.5 1.5V12Q17.5 13 16.5 13H7L4.5 16V13H2.5Q1.5 13 1.5 12V1.5Q1.5 0.5 2.5 0.5Z" fill="#fff" stroke="#4d4d7a" stroke-width="1.1"/><path d="M4.5 4H14.5M4.5 6.5H14.5M4.5 9H8" stroke="#0b7cc5" stroke-width="1.1"/></svg><div class="t" style="left:97px;top:83px;">软元件表</div><div class="a" style="left:59px;top:110px;width:14px;height:1px;background:repeating-linear-gradient(to right,#a0a0a0 0 1px,transparent 1px 2px)"></div><svg style="left:72px;top:101px" width="20" height="20" viewBox="0 0 20 20"><path d="M10 1L18.5 4.5V14.5L10 18.5L1.5 14.5V4.5Z M1.5 4.5L10 8L18.5 4.5M10 8V18.5" fill="#fff" stroke="#4d4d7a" stroke-width="1.1"/><path d="M11.5 9V16L17 13.5V7Z" fill="#0b7cc5"/></svg><div class="t" style="left:97px;top:103px;">功能块实例</div><div class="a" style="left:59px;top:130px;width:14px;height:1px;background:repeating-linear-gradient(to right,#a0a0a0 0 1px,transparent 1px 2px)"></div><svg style="left:72px;top:121px" width="20" height="20" viewBox="0 0 20 20"><circle cx="10" cy="10" r="7.8" fill="#0b7cc5"/><path d="M5 6Q7 3.5 10 3.8L11 5.5L8.5 7.5L9.5 9L6.5 10L4.5 8.5Z M11.5 10L15 10.5L14.5 13.5L12 17L11 13.5Z M13.5 4.5L16 6L15 7.5Z" fill="#fff"/><ellipse cx="10" cy="10" rx="10" ry="3.6" transform="rotate(-33 10 10)" fill="none" stroke="#8a8a8a" stroke-width="1.2"/></svg><div class="t" style="left:97px;top:123px;">变量表</div><div class="a" style="left:36px;top:150px;width:14px;height:1px;background:repeating-linear-gradient(to right,#a0a0a0 0 1px,transparent 1px 2px)"></div><svg style="left:32px;top:146px" width="9" height="9" viewBox="0 0 9 9"><rect x="0.5" y="0.5" width="8" height="8" rx="1" fill="#f4f4f4" stroke="#9a9a9a"/><path d="M2 4.5H7" stroke="#3c5a9a" stroke-width="1"/></svg><svg style="left:49px;top:141px" width="20" height="20" viewBox="0 0 20 20"><rect x="0.5" y="1.5" width="18" height="17" fill="#fff" stroke="#4d4d7a" stroke-width="1.1"/><path d="M1 10H6.5M6.5 6V14M12.5 6V14M12.5 10H18" stroke="#0b7cc5" stroke-width="1.3"/></svg><div class="t" style="left:74px;top:143px;">编程</div><div class="a" style="left:59px;top:170px;width:14px;height:1px;background:repeating-linear-gradient(to right,#a0a0a0 0 1px,transparent 1px 2px)"></div><svg style="left:55px;top:166px" width="9" height="9" viewBox="0 0 9 9"><rect x="0.5" y="0.5" width="8" height="8" rx="1" fill="#f4f4f4" stroke="#9a9a9a"/><path d="M2 4.5H7" stroke="#3c5a9a" stroke-width="1"/></svg><svg style="left:72px;top:161px" width="20" height="20" viewBox="0 0 20 20"><rect x="1" y="1" width="6.5" height="6.5" fill="#4d4d7a"/><rect x="9.5" y="1" width="6.5" height="6.5" fill="#4d4d7a"/><rect x="1" y="9.5" width="6.5" height="6.5" fill="#4d4d7a"/><circle cx="13" cy="13" r="3.5" fill="#0b7cc5"/></svg><div class="t" style="left:97px;top:163px;">程序块</div><div class="a" style="left:82px;top:190px;width:14px;height:1px;background:repeating-linear-gradient(to right,#a0a0a0 0 1px,transparent 1px 2px)"></div><svg style="left:95px;top:181px" width="20" height="20" viewBox="0 0 20 20"><path d="M10 16.5H3.5V1.5H16.5V10.5" fill="#fff" stroke="#4d4d7a" stroke-width="1.2"/><path d="M5.5 3.5H15M5.5 5.5H15M5.5 7.8H11.5" stroke="#0b7cc5" stroke-width="1.2"/><text x="9.8" y="16.3" font-size="8" font-weight="bold" font-style="italic" font-family="Liberation Sans" fill="#0b7cc5">M</text></svg><div class="t" style="left:120px;top:183px;">MAIN</div><div class="a" style="left:82px;top:210px;width:14px;height:1px;background:repeating-linear-gradient(to right,#a0a0a0 0 1px,transparent 1px 2px)"></div><svg style="left:95px;top:201px" width="20" height="20" viewBox="0 0 20 20"><path d="M10 16.5H3.5V1.5H16.5V10.5" fill="#fff" stroke="#4d4d7a" stroke-width="1.2"/><path d="M5.5 3.5H15M5.5 5.5H15M5.5 7.8H11.5" stroke="#0b7cc5" stroke-width="1.2"/><text x="11" y="16.3" font-size="8" font-weight="bold" font-style="italic" font-family="Liberation Sans" fill="#0b7cc5">S</text></svg><div class="t" style="left:120px;top:203px;">SBR_001</div><div class="a" style="left:82px;top:230px;width:14px;height:1px;background:repeating-linear-gradient(to right,#a0a0a0 0 1px,transparent 1px 2px)"></div><svg style="left:95px;top:221px" width="20" height="20" viewBox="0 0 20 20"><path d="M10 16.5H3.5V1.5H16.5V10.5" fill="#fff" stroke="#4d4d7a" stroke-width="1.2"/><path d="M5.5 3.5H15M5.5 5.5H15M5.5 7.8H11.5" stroke="#0b7cc5" stroke-width="1.2"/><text x="12" y="16.3" font-size="8" font-weight="bold" font-style="italic" font-family="Liberation Serif" fill="#0b7cc5">I</text></svg><div class="t" style="left:120px;top:223px;">INT_001</div><div class="a" style="left:59px;top:250px;width:14px;height:1px;background:repeating-linear-gradient(to right,#a0a0a0 0 1px,transparent 1px 2px)"></div><svg style="left:55px;top:246px" width="9" height="9" viewBox="0 0 9 9"><rect x="0.5" y="0.5" width="8" height="8" rx="1" fill="#f4f4f4" stroke="#9a9a9a"/><path d="M2 4.5H7" stroke="#3c5a9a" stroke-width="1"/></svg><svg style="left:72px;top:241px" width="20" height="20" viewBox="0 0 20 20"><path d="M1 3H8M10.5 3H17M1 7H10M12.5 7H17M1 11H17M1 15H17" stroke="#4d4d7a" stroke-width="2.2"/><path d="M11 3H17M13 7H17" stroke="#0b7cc5" stroke-width="2.2"/></svg><div class="t" style="left:97px;top:243px;">功能块(FB)</div><div class="a" style="left:82px;top:270px;width:14px;height:1px;background:repeating-linear-gradient(to right,#a0a0a0 0 1px,transparent 1px 2px)"></div><svg style="left:95px;top:261px" width="20" height="20" viewBox="0 0 20 20"><path d="M3.5 2.5H12.5L16.5 6.5V17H3.5Z" fill="#fff" stroke="#4d4d7a" stroke-width="1.1"/><path d="M12.5 2.5V6.5H16.5" fill="none" stroke="#4d4d7a" stroke-width="1"/><text x="4.5" y="15.5" font-size="8.5" font-family="Liberation Sans" fill="#0b7cc5" textLength="11" lengthAdjust="spacingAndGlyphs">FB</text><text x="1.5" y="5.5" font-size="6.5" font-weight="bold" font-family="Liberation Sans" fill="#0b7cc5">$</text></svg><div class="a" style="left:118px;top:260px;width:134px;height:20px;background:#0078d7"></div><div class="t" style="left:120px;top:263px;color:#fff;letter-spacing:-0.3px">Easy521_CRC16_Check</div><div class="a" style="left:59px;top:290px;width:14px;height:1px;background:repeating-linear-gradient(to right,#a0a0a0 0 1px,transparent 1px 2px)"></div><svg style="left:72px;top:281px" width="20" height="20" viewBox="0 0 20 20"><path d="M1 3H17M1 7.5H17M1 12H6" stroke="#4d4d7a" stroke-width="2.2"/><path d="M9 11Q7.5 13.5 9 16M14 11Q15.5 13.5 14 16" stroke="#0b7cc5" stroke-width="1.2" fill="none"/></svg><div class="t" style="left:97px;top:283px;">函数(FC)</div><div class="a" style="left:36px;top:310px;width:14px;height:1px;background:repeating-linear-gradient(to right,#a0a0a0 0 1px,transparent 1px 2px)"></div><svg style="left:32px;top:306px" width="9" height="9" viewBox="0 0 9 9"><rect x="0.5" y="0.5" width="8" height="8" rx="1" fill="#f4f4f4" stroke="#9a9a9a"/><path d="M2 4.5H7" stroke="#3c5a9a" stroke-width="1"/></svg><svg style="left:49px;top:301px" width="20" height="20" viewBox="0 0 20 20"><rect x="0.5" y="0.5" width="16" height="17" fill="#fff" stroke="#4d4d7a" stroke-width="1.1"/><path d="M4 1V17M8 1V17M12 1V10" stroke="#4d4d7a" stroke-width="1.1"/><path d="M2.5 11H5.5M6.5 6H9.5M10.5 4H13.5" stroke="#4d4d7a" stroke-width="2"/><circle cx="14.5" cy="14.5" r="5" fill="#fff"/><path d="M17.43 13.86 L18.76 13.91 L18.76 15.09 L17.43 15.14 L17.03 16.12 L17.93 17.10 L17.10 17.93 L16.12 17.03 L15.14 17.43 L15.09 18.76 L13.91 18.76 L13.86 17.43 L12.88 17.03 L11.90 17.93 L11.07 17.10 L11.97 16.12 L11.57 15.14 L10.24 15.09 L10.24 13.91 L11.57 13.86 L11.97 12.88 L11.07 11.90 L11.90 11.07 L12.88 11.97 L13.86 11.57 L13.91 10.24 L15.09 10.24 L15.14 11.57 L16.12 11.97 L17.10 11.07 L17.93 11.90 L17.03 12.88Z M15.8 14.5 A1.3 1.3 0 1 0 13.2 14.5 A1.3 1.3 0 1 0 15.8 14.5Z" fill="#0b7cc5" fill-rule="evenodd"/></svg><div class="t" style="left:74px;top:303px;">配置</div><div class="a" style="left:59px;top:330px;width:14px;height:1px;background:repeating-linear-gradient(to right,#a0a0a0 0 1px,transparent 1px 2px)"></div><svg style="left:72px;top:321px" width="20" height="20" viewBox="0 0 20 20"><path d="M0.5 8H4L5.5 6L7 9L9 3.5L11 9.5L12.5 6.5L14 8H18" stroke="#0b7cc5" stroke-width="1.1" fill="none"/><rect x="1.5" y="12.5" width="16" height="4" fill="#fff" stroke="#4d4d7a" stroke-width="1.1"/><path d="M3 14.5H16" stroke="#4d4d7a" stroke-width="0.8"/></svg><div class="t" style="left:97px;top:323px;">输入滤波</div><div class="a" style="left:59px;top:350px;width:14px;height:1px;background:repeating-linear-gradient(to right,#a0a0a0 0 1px,transparent 1px 2px)"></div><svg style="left:72px;top:341px" width="20" height="20" viewBox="0 0 20 20"><rect x="3.5" y="0.5" width="11" height="17" fill="#fff" stroke="#4d4d7a" stroke-width="1.1"/><path d="M7.5 1V17M3.5 1V17" stroke="#4d4d7a" stroke-width="1.2"/><path d="M9.5 3.5H12M9.5 6H12M9.5 8.5H12M9.5 11H12M9.5 13.5H12" stroke="#0b7cc5" stroke-width="1.2"/></svg><div class="t" style="left:97px;top:343px;">EXP-A</div><div class="a" style="left:59px;top:370px;width:14px;height:1px;background:repeating-linear-gradient(to right,#a0a0a0 0 1px,transparent 1px 2px)"></div><svg style="left:72px;top:361px" width="20" height="20" viewBox="0 0 20 20"><rect x="3.5" y="0.5" width="11" height="17" fill="#fff" stroke="#4d4d7a" stroke-width="1.1"/><path d="M7.5 1V17M3.5 1V17" stroke="#4d4d7a" stroke-width="1.2"/><path d="M9.5 3.5H12M9.5 6H12M9.5 8.5H12M9.5 11H12M9.5 13.5H12" stroke="#0b7cc5" stroke-width="1.2"/></svg><div class="t" style="left:97px;top:363px;">EXP-B</div><div class="a" style="left:59px;top:390px;width:14px;height:1px;background:repeating-linear-gradient(to right,#a0a0a0 0 1px,transparent 1px 2px)"></div><svg style="left:72px;top:381px" width="20" height="20" viewBox="0 0 20 20"><path d="M2 4H7M2 8.5H7M2 13H7M1 17H17" stroke="#4d4d7a" stroke-width="1.1"/><path d="M16.13 7.81 L17.56 7.87 L17.56 9.13 L16.13 9.19 L15.70 10.23 L16.67 11.28 L15.78 12.17 L14.73 11.20 L13.69 11.63 L13.63 13.06 L12.37 13.06 L12.31 11.63 L11.27 11.20 L10.22 12.17 L9.33 11.28 L10.30 10.23 L9.87 9.19 L8.44 9.13 L8.44 7.87 L9.87 7.81 L10.30 6.77 L9.33 5.72 L10.22 4.83 L11.27 5.80 L12.31 5.37 L12.37 3.94 L13.63 3.94 L13.69 5.37 L14.73 5.80 L15.78 4.83 L16.67 5.72 L15.70 6.77Z M14.4 8.5 A1.4 1.4 0 1 0 11.6 8.5 A1.4 1.4 0 1 0 14.4 8.5Z" fill="#0b7cc5" fill-rule="evenodd"/></svg><div class="t" style="left:97px;top:383px;">模块配置</div><div class="a" style="left:59px;top:410px;width:14px;height:1px;background:repeating-linear-gradient(to right,#a0a0a0 0 1px,transparent 1px 2px)"></div><svg style="left:72px;top:401px" width="20" height="20" viewBox="0 0 20 20"><path d="M2 10Q3 4 9 1.5L14 3.5L13 13L9 17Q3 15 2 10Z" fill="#0b7cc5"/><path d="M9 1.5L14 3.5Q15 9 13 13L9 11Q10 6 9 1.5Z" fill="#075a92"/><path d="M9 9L17 13L15.5 17L8 13Z" fill="#7a7a7a"/><circle cx="2.5" cy="10" r="1.5" fill="#7a7a7a"/></svg><div class="t" style="left:97px;top:403px;">电子凸轮</div><div class="a" style="left:59px;top:430px;width:14px;height:1px;background:repeating-linear-gradient(to right,#a0a0a0 0 1px,transparent 1px 2px)"></div><svg style="left:72px;top:421px" width="20" height="20" viewBox="0 0 20 20"><rect x="0.5" y="0.5" width="7" height="17" fill="#fff" stroke="#4d4d7a" stroke-width="1.1"/><path d="M3 1V17M5.5 2V16" stroke="#4d4d7a" stroke-width="1.4"/><circle cx="13.5" cy="4" r="2" fill="none" stroke="#0b7cc5" stroke-width="1.3"/><rect x="9.5" y="8.5" width="8" height="9" fill="#fff" stroke="#4d4d7a" stroke-width="1.1"/><circle cx="13.5" cy="13" r="2.3" fill="none" stroke="#4d4d7a" stroke-width="1.1"/></svg><div class="t" style="left:97px;top:423px;">运动控制轴</div><div class="a" style="left:59px;top:450px;width:14px;height:1px;background:repeating-linear-gradient(to right,#a0a0a0 0 1px,transparent 1px 2px)"></div><svg style="left:72px;top:441px" width="20" height="20" viewBox="0 0 20 20"><path d="M15.56 8.17 L17.92 8.34 L17.92 10.66 L15.56 10.83 L14.72 12.84 L16.28 14.63 L14.63 16.28 L12.84 14.72 L10.83 15.56 L10.66 17.92 L8.34 17.92 L8.17 15.56 L6.16 14.72 L4.37 16.28 L2.72 14.63 L4.28 12.84 L3.44 10.83 L1.08 10.66 L1.08 8.34 L3.44 8.17 L4.28 6.16 L2.72 4.37 L4.37 2.72 L6.16 4.28 L8.17 3.44 L8.34 1.08 L10.66 1.08 L10.83 3.44 L12.84 4.28 L14.63 2.72 L16.28 4.37 L14.72 6.16Z" fill="#fff" stroke="#4d4d7a" stroke-width="1.1"/><circle cx="9.5" cy="9.5" r="3.8" fill="#fff" stroke="#4d4d7a" stroke-width="1"/><circle cx="9.5" cy="9.5" r="2.2" fill="#0b7cc5"/></svg><div class="t" style="left:97px;top:443px;">轴组设置</div><div class="a" style="left:59px;top:470px;width:14px;height:1px;background:repeating-linear-gradient(to right,#a0a0a0 0 1px,transparent 1px 2px)"></div><svg style="left:72px;top:461px" width="20" height="20" viewBox="0 0 20 20"><path d="M0.5 4.5H15L13 1L19.5 6.5V7.5H0.5Z" fill="#0b7cc5"/><path d="M19.5 11.5H5L7 16L0.5 12.5V11.5Z" fill="#4d4d7a"/><path d="M0.5 11.5H19.5V13.5H0.5Z" fill="#4d4d7a"/></svg><div class="t" style="left:97px;top:463px;">EtherCAT</div><div class="a" style="left:59px;top:490px;width:14px;height:1px;background:repeating-linear-gradient(to right,#a0a0a0 0 1px,transparent 1px 2px)"></div><svg style="left:72px;top:481px" width="20" height="20" viewBox="0 0 20 20"><path d="M3 3.5H17Q19.5 3.5 19 6L17 13Q16.5 15.5 14 15.5H6Q3.5 15.5 3 13L1 6Q0.5 3.5 3 3.5Z" fill="#fff" stroke="#4d4d7a" stroke-width="1.2"/><path d="M6 7.5H7.5M9.3 7.5H10.8M12.5 7.5H14M7.7 11H9.2M10.9 11H12.4" stroke="#0b7cc5" stroke-width="1.6"/></svg><div class="t" style="left:97px;top:483px;">COM0</div><div class="a" style="left:59px;top:510px;width:14px;height:1px;background:repeating-linear-gradient(to right,#a0a0a0 0 1px,transparent 1px 2px)"></div><svg style="left:72px;top:501px" width="20" height="20" viewBox="0 0 20 20"><path d="M1.5 8V17Q1.5 18.5 3 18.5H17Q18.5 18.5 18.5 17V8Q18.5 6.5 17 6.5H15V3.5H5V6.5H3Q1.5 6.5 1.5 8Z" fill="#fff" stroke="#4d4d7a" stroke-width="1.2"/><rect x="4" y="9.5" width="12" height="6.5" fill="none" stroke="#0b7cc5" stroke-width="1.3"/><path d="M6.5 13V16M9 13V16M11.5 13V16M4 12.5H16" stroke="#0b7cc5" stroke-width="1"/></svg><div class="t" style="left:97px;top:503px;">以太网</div><div class="a" style="left:59px;top:530px;width:14px;height:1px;background:repeating-linear-gradient(to right,#a0a0a0 0 1px,transparent 1px 2px)"></div><svg style="left:72px;top:521px" width="20" height="20" viewBox="0 0 20 20"><path d="M3 1.5H1V18.5H3M16 1.5H17V8" fill="none" stroke="#4d4d7a" stroke-width="1.1"/><path d="M3.5 2V17M7.5 2V17M11.5 2V11" stroke="#4d4d7a" stroke-width="1.1"/><path d="M3.5 5V8M7.5 9V12M11.5 3.5V6.5" stroke="#4d4d7a" stroke-width="2.4"/><circle cx="15" cy="15" r="5" fill="#fff"/><path d="M18.13 14.31 L19.56 14.37 L19.56 15.63 L18.13 15.69 L17.70 16.73 L18.67 17.78 L17.78 18.67 L16.73 17.70 L15.69 18.13 L15.63 19.56 L14.37 19.56 L14.31 18.13 L13.27 17.70 L12.22 18.67 L11.33 17.78 L12.30 16.73 L11.87 15.69 L10.44 15.63 L10.44 14.37 L11.87 14.31 L12.30 13.27 L11.33 12.22 L12.22 11.33 L13.27 12.30 L14.31 11.87 L14.37 10.44 L15.63 10.44 L15.69 11.87 L16.73 12.30 L17.78 11.33 L18.67 12.22 L17.70 13.27Z M16.4 15 A1.4 1.4 0 1 0 13.6 15 A1.4 1.4 0 1 0 16.4 15Z" fill="#0b7cc5" fill-rule="evenodd"/></svg><div class="t" style="left:97px;top:523px;">EtherNet/IP</div></div><div class="a" style="left:1105px;top:111px;width:1px;height:570px;background:#a0a0a0"></div><div class="a" style="left:277px;top:117px;width:15px;height:15px;background:#fafafa;border-right:1px solid #a0a0a0;border-bottom:1px solid #a0a0a0"></div><svg style="left:281px;top:119px" width="8" height="11" viewBox="0 0 8 11"><path d="M6.5 1V10L1.5 5.5Z" fill="none" stroke="#000" stroke-width="1.1"/></svg><div class="a" style="left:1083px;top:117px;width:16px;height:16px;background:#fafafa;border-right:1px solid #a0a0a0;border-bottom:1px solid #a0a0a0"></div><svg style="left:1088px;top:120px" width="8" height="11" viewBox="0 0 8 11"><path d="M1.5 1V10L6.5 5.5Z" fill="none" stroke="#000" stroke-width="1.1"/></svg><div class="a" style="left:278px;top:137px;width:827px;height:1px;background:#a0a0a0"></div><svg style="left:290px;top:112px" width="100" height="27" viewBox="0 0 100 27"><path d="M6.5 25.5L29.5 2.5H84Q87.5 2.5 88.5 6L89 25.5" fill="#f0f0f0" stroke="#a0a0a0" stroke-width="1"/></svg><svg style="left:321px;top:116px" width="17" height="18" viewBox="0 0 17 18"><path d="M10 16.5H3.5V1.5H16.5V10.5" fill="#fff" stroke="#4d4d7a" stroke-width="1.2"/><path d="M5.5 3.5H15M5.5 5.5H15M5.5 7.8H11.5" stroke="#0b7cc5" stroke-width="1.2"/><text x="9.8" y="16.3" font-size="8" font-weight="bold" font-style="italic" font-family="Liberation Sans" fill="#0b7cc5">M</text></svg><div class="t" style="left:339px;top:118px;font-size:12px">MAIN</div><svg style="left:355px;top:112px" width="212" height="27" viewBox="0 0 212 27"><path d="M5.5 26L29.5 1.5H205Q209.5 1.5 209.5 6V26" fill="#fff" stroke="#a0a0a0" stroke-width="1"/></svg><svg style="left:384px;top:116px" width="17" height="18" viewBox="0 0 17 18"><path d="M3.5 2.5H12.5L16.5 6.5V17H3.5Z" fill="#fff" stroke="#4d4d7a" stroke-width="1.1"/><path d="M12.5 2.5V6.5H16.5" fill="none" stroke="#4d4d7a" stroke-width="1"/><text x="4.5" y="15.5" font-size="8.5" font-family="Liberation Sans" fill="#0b7cc5" textLength="11" lengthAdjust="spacingAndGlyphs">FB</text><text x="1.5" y="5.5" font-size="6.5" font-weight="bold" font-family="Liberation Sans" fill="#0b7cc5">$</text></svg><div class="t" style="left:406px;top:118px;font-weight:bold;font-size:11.6px">Easy521_CRC16_Check</div><svg style="left:548px;top:123px" width="9" height="8" viewBox="0 0 9 8"><path d="M0.5 0.5L8.5 7.5M8.5 0.5L0.5 7.5" stroke="#000" stroke-width="1.4" fill="none"/></svg><div class="a" style="left:361px;top:137px;width:204px;height:1px;background:#fff"></div><div class="a" style="left:279px;top:139px;width:823px;height:39px;border:1px solid #e0e0e0;border-right-color:#fff;border-bottom-color:#fff;background:#f0f0f0"></div><div class="a" style="left:280px;top:140px;width:821px;height:37px;border-top:3px solid #6e6e6e;border-left:3px solid #6e6e6e;border-right:1px solid #e8e8e8;border-bottom:1px solid #e8e8e8"></div><div class="a" style="left:283px;top:143px;width:799px;height:16px;background:#f0f0f0"></div><div class="a" style="left:283px;top:159px;width:799px;height:1px;background:#a0a0a0"></div><div class="a" style="left:283px;top:160px;width:52px;height:15px;background:#f0f0f0"></div><div class="a" style="left:335px;top:160px;width:747px;height:15px;background:#fff"></div><div class="a" style="left:283px;top:175px;width:799px;height:1px;background:#a0a0a0"></div><div class="a" style="left:335px;top:143px;width:1px;height:32px;background:#a0a0a0"></div><div class="a" style="left:455px;top:143px;width:1px;height:32px;background:#a0a0a0"></div><div class="a" style="left:535px;top:143px;width:1px;height:32px;background:#a0a0a0"></div><div class="a" style="left:615px;top:143px;width:1px;height:32px;background:#a0a0a0"></div><div class="a" style="left:695px;top:143px;width:1px;height:32px;background:#a0a0a0"></div><div class="a" style="left:773px;top:143px;width:1px;height:32px;background:#a0a0a0"></div><div class="a" style="left:1081px;top:143px;width:1px;height:32px;background:#a0a0a0"></div><div class="t" style="left:285px;top:144px;font-family:'Liberation Sans',sans-serif;font-size:13px">序号</div><div class="t" style="left:338px;top:144px;font-family:'Liberation Sans',sans-serif;font-size:13px">类别</div><div class="t" style="left:458px;top:144px;font-family:'Liberation Sans',sans-serif;font-size:13px">名称</div><div class="t" style="left:538px;top:144px;font-family:'Liberation Sans',sans-serif;font-size:13px">数据类型</div><div class="t" style="left:617px;top:144px;font-family:'Liberation Sans',sans-serif;font-size:13px">初始值</div><div class="t" style="left:698px;top:144px;font-family:'Liberation Sans',sans-serif;font-size:13px">掉电保持</div><div class="t" style="left:776px;top:144px;font-family:'Liberation Sans',sans-serif;font-size:13px">注释</div><svg style="left:443px;top:144px" width="10" height="13" viewBox="0 0 10 13"><path d="M1 5.5L5 1L9 5.5ZM1 7.5L5 12L9 7.5Z" fill="#a8a8c0"/></svg><div class="t" style="left:326px;top:162px;font-family:'Liberation Mono',monospace;font-size:10px">1</div><div class="t" style="left:338px;top:162px;font-family:'Liberation Mono',monospace;font-size:10px">IN</div><div class="t" style="left:458px;top:162px;font-family:'Liberation Mono',monospace;font-size:10px">xDataBuf</div><div class="t" style="left:538px;top:162px;font-family:'Liberation Mono',monospace;font-size:10px">INT[128]</div><div class="t" style="left:618px;top:162px;font-family:'Liberation Mono',monospace;font-size:10px">...</div><div class="t" style="left:698px;top:161px;font-size:12.5px">不保持</div><div class="a" style="left:1082px;top:143px;width:18px;height:32px;background:#f0f0f0"></div><svg style="left:1087px;top:148px" width="9" height="6" viewBox="0 0 9 6"><path d="M1 5L4.5 1.5L8 5" stroke="#606060" stroke-width="2" fill="none"/></svg><svg style="left:1087px;top:166px" width="9" height="6" viewBox="0 0 9 6"><path d="M1 1L4.5 4.5L8 1" stroke="#606060" stroke-width="2" fill="none"/></svg><div class="a" style="left:677px;top:178px;width:12px;height:4px;background:#b8c4d4;border-radius:2px 2px 0 0"></div><div class="a" style="left:276px;top:680px;width:830px;height:1px;background:#a0a0a0"></div><div class="a" style="left:277px;top:678px;width:828px;height:1px;background:#fff"></div><div class="a" style="left:1104px;top:111px;width:1px;height:568px;background:#fff"></div><div class="a" style="left:279px;top:182px;width:824px;height:496px;border:1px solid #e0e0e0;border-right-color:#fff;border-bottom-color:#fff"></div><div class="a" style="left:280px;top:183px;width:822px;height:494px;border-top:2px solid #6e6e6e;border-left:2px solid #6e6e6e;border-right:1px solid #e8e8e8;border-bottom:1px solid #e8e8e8;background:#fff"></div><div class="a" style="left:282px;top:185px;width:44px;height:475px;background:#f0f0f0"></div><div class="a" style="left:326px;top:185px;width:20px;height:475px;background:#f6f6f6"></div><div class="a" style="left:1085px;top:185px;width:16px;height:475px;background:#f0f0f0"></div><div class="a" style="left:1085px;top:232px;width:15px;height:263px;background:#cdcdcd"></div><svg style="left:1088px;top:190px" width="9" height="6" viewBox="0 0 9 6"><path d="M1 5L4.5 1.5L8 5" stroke="#606060" stroke-width="2" fill="none"/></svg><svg style="left:1088px;top:647px" width="9" height="6" viewBox="0 0 9 6"><path d="M1 1L4.5 4.5L8 1" stroke="#606060" stroke-width="2" fill="none"/></svg><div class="a" style="left:282px;top:660px;width:819px;height:16px;background:#f0f0f0"></div><div class="a" style="left:298px;top:660px;width:283px;height:15px;background:#cdcdcd"></div><svg style="left:286px;top:664px" width="6" height="9" viewBox="0 0 6 9"><path d="M5 1L1.5 4.5L5 8" stroke="#606060" stroke-width="2" fill="none"/></svg><svg style="left:1073px;top:664px" width="6" height="9" viewBox="0 0 6 9"><path d="M1 1L4.5 4.5L1 8" stroke="#606060" stroke-width="2" fill="none"/></svg><div class="a" style="left:282px;top:185px;width:803px;height:475px;overflow:hidden"><div class="t" style="left:0px;top:2px;width:24px;text-align:right;font-family:'Liberation Mono',monospace;font-size:13.33px;line-height:19px;-webkit-text-stroke:0.25px currentColor;-webkit-text-stroke:0;color:#000">4</div><div class="t" style="left:64px;top:2px;font-family:'Liberation Mono',monospace;font-size:13.33px;line-height:19px;-webkit-text-stroke:0.25px currentColor"><b style="color:#0000ff">IF</b> <span style="color:#2424ff">(</span><span style="color:#2424ff">(</span><span style="color:#16167a">xDataCount</span><span style="color:#2424ff">&gt;=</span><span style="color:#800080">1</span><span style="color:#2424ff">)</span> <b style="color:#0000ff">AND</b> <span style="color:#2424ff">(</span><span style="color:#16167a">xDataCount</span><span style="color:#2424ff">&lt;=</span><span style="color:#800080">256</span><span style="color:#2424ff">)</span><span style="color:#2424ff">)</span> <b style="color:#0000ff">THEN</b></div><div class="t" style="left:0px;top:21px;width:24px;text-align:right;font-family:'Liberation Mono',monospace;font-size:13.33px;line-height:19px;-webkit-text-stroke:0.25px currentColor;-webkit-text-stroke:0;color:#000">5</div><div class="t" style="left:96px;top:21px;font-family:'Liberation Mono',monospace;font-size:13.33px;line-height:19px;-webkit-text-stroke:0.25px currentColor"><span style="color:#16167a">COM_CRC_Data</span><span style="color:#2424ff">:=</span><span style="color:#800080">16#FFFF</span><span style="color:#2424ff">;</span></div><div class="t" style="left:0px;top:40px;width:24px;text-align:right;font-family:'Liberation Mono',monospace;font-size:13.33px;line-height:19px;-webkit-text-stroke:0.25px currentColor;-webkit-text-stroke:0;color:#000">6</div><div class="t" style="left:96px;top:40px;font-family:'Liberation Mono',monospace;font-size:13.33px;line-height:19px;-webkit-text-stroke:0.25px currentColor"><span style="color:#16167a">TempCount</span><span style="color:#2424ff">:=</span><span style="color:#800080">0</span><span style="color:#2424ff">;</span></div><div class="t" style="left:0px;top:59px;width:24px;text-align:right;font-family:'Liberation Mono',monospace;font-size:13.33px;line-height:19px;-webkit-text-stroke:0.25px currentColor;-webkit-text-stroke:0;color:#000">7</div><div class="t" style="left:96px;top:59px;font-family:'Liberation Mono',monospace;font-size:13.33px;line-height:19px;-webkit-text-stroke:0.25px currentColor"><b style="color:#0000ff">FOR</b> <span style="color:#16167a">II</span><span style="color:#2424ff">:=</span><span style="color:#800080">0</span> <b style="color:#0000ff">TO</b> <span style="color:#2424ff">(</span><span style="color:#16167a">xDataCount</span><span style="color:#2424ff">-</span><span style="color:#800080">1</span><span style="color:#2424ff">)</span> <b style="color:#0000ff">BY</b> <span style="color:#800080">1</span> <b style="color:#0000ff">DO</b></div><div class="t" style="left:0px;top:78px;width:24px;text-align:right;font-family:'Liberation Mono',monospace;font-size:13.33px;line-height:19px;-webkit-text-stroke:0.25px currentColor;-webkit-text-stroke:0;color:#000">8</div><div class="t" style="left:128px;top:78px;font-family:'Liberation Mono',monospace;font-size:13.33px;line-height:19px;-webkit-text-stroke:0.25px currentColor"><span style="color:#16167a">COM_Temp_Data</span><span style="color:#2424ff">:=</span><span style="color:#2424ff">(</span><span style="color:#2424ff">(</span><span style="color:#16167a">SHR</span><span style="color:#2424ff">(</span><span style="color:#16167a">xDataBuf</span><span style="color:#2424ff">[</span><span style="color:#16167a">II</span><span style="color:#2424ff">]</span><span style="color:#2424ff">,</span><span style="color:#800080">0</span><span style="color:#2424ff">)</span><span style="color:#2424ff">)</span> <b style="color:#0000ff">AND</b> <span style="color:#800080">16#00FF</span><span style="color:#2424ff">)</span><span style="color:#2424ff">;</span></div><div class="t" style="left:0px;top:97px;width:24px;text-align:right;font-family:'Liberation Mono',monospace;font-size:13.33px;line-height:19px;-webkit-text-stroke:0.25px currentColor;-webkit-text-stroke:0;color:#000">9</div><div class="t" style="left:128px;top:97px;font-family:'Liberation Mono',monospace;font-size:13.33px;line-height:19px;-webkit-text-stroke:0.25px currentColor"><span style="color:#16167a">COM_CRC_Data</span><span style="color:#2424ff">:=</span><span style="color:#2424ff">(</span><span style="color:#16167a">COM_CRC_Data</span> <b style="color:#0000ff">XOR</b> <span style="color:#16167a">COM_Temp_Data</span><span style="color:#2424ff">)</span><span style="color:#2424ff">;</span></div><div class="t" style="left:0px;top:116px;width:24px;text-align:right;font-family:'Liberation Mono',monospace;font-size:13.33px;line-height:19px;-webkit-text-stroke:0.25px currentColor;-webkit-text-stroke:0;color:#000">10</div><div class="t" style="left:128px;top:116px;font-family:'Liberation Mono',monospace;font-size:13.33px;line-height:19px;-webkit-text-stroke:0.25px currentColor"><b style="color:#0000ff">FOR</b> <span style="color:#16167a">JJ</span><span style="color:#2424ff">:=</span><span style="color:#800080">0</span> <b style="color:#0000ff">TO</b> <span style="color:#800080">7</span> <b style="color:#0000ff">BY</b> <span style="color:#800080">1</span> <b style="color:#0000ff">DO</b></div><div class="t" style="left:0px;top:135px;width:24px;text-align:right;font-family:'Liberation Mono',monospace;font-size:13.33px;line-height:19px;-webkit-text-stroke:0.25px currentColor;-webkit-text-stroke:0;color:#000">11</div><div class="t" style="left:160px;top:135px;font-family:'Liberation Mono',monospace;font-size:13.33px;line-height:19px;-webkit-text-stroke:0.25px currentColor"><b style="color:#0000ff">IF</b> <span style="color:#2424ff">(</span><span style="color:#2424ff">(</span><span style="color:#16167a">COM_CRC_Data</span> <b style="color:#0000ff">AND</b> <span style="color:#800080">16#0001</span><span style="color:#2424ff">)</span><span style="color:#2424ff">=</span><span style="color:#800080">16#0001</span><span style="color:#2424ff">)</span> <b style="color:#0000ff">THEN</b></div><div class="t" style="left:0px;top:154px;width:24px;text-align:right;font-family:'Liberation Mono',monospace;font-size:13.33px;line-height:19px;-webkit-text-stroke:0.25px currentColor;-webkit-text-stroke:0;color:#000">12</div><div class="t" style="left:192px;top:154px;font-family:'Liberation Mono',monospace;font-size:13.33px;line-height:19px;-webkit-text-stroke:0.25px currentColor"><span style="color:#16167a">COM_CRC_Data</span><span style="color:#2424ff">:=</span><span style="color:#2424ff">(</span><span style="color:#16167a">SHR</span><span style="color:#2424ff">(</span><span style="color:#16167a">COM_CRC_Data</span><span style="color:#2424ff">,</span><span style="color:#800080">1</span><span style="color:#2424ff">)</span><span style="color:#2424ff">)</span><span style="color:#2424ff">;</span></div><div class="t" style="left:0px;top:173px;width:24px;text-align:right;font-family:'Liberation Mono',monospace;font-size:13.33px;line-height:19px;-webkit-text-stroke:0.25px currentColor;-webkit-text-stroke:0;color:#000">13</div><div class="t" style="left:192px;top:173px;font-family:'Liberation Mono',monospace;font-size:13.33px;line-height:19px;-webkit-text-stroke:0.25px currentColor"><span style="color:#16167a">COM_CRC_Data</span><span style="color:#2424ff">:=</span><span style="color:#2424ff">(</span><span style="color:#16167a">COM_CRC_Data</span> <b style="color:#0000ff">XOR</b> <span style="color:#800080">16#A001</span><span style="color:#2424ff">)</span><span style="color:#2424ff">;</span></div><div class="t" style="left:0px;top:192px;width:24px;text-align:right;font-family:'Liberation Mono',monospace;font-size:13.33px;line-height:19px;-webkit-text-stroke:0.25px currentColor;-webkit-text-stroke:0;color:#000">14</div><div class="t" style="left:160px;top:192px;font-family:'Liberation Mono',monospace;font-size:13.33px;line-height:19px;-webkit-text-stroke:0.25px currentColor"><b style="color:#0000ff">ELSE</b></div><div class="t" style="left:0px;top:211px;width:24px;text-align:right;font-family:'Liberation Mono',monospace;font-size:13.33px;line-height:19px;-webkit-text-stroke:0.25px currentColor;-webkit-text-stroke:0;color:#000">15</div><div class="t" style="left:192px;top:211px;font-family:'Liberation Mono',monospace;font-size:13.33px;line-height:19px;-webkit-text-stroke:0.25px currentColor"><span style="color:#16167a">COM_CRC_Data</span><span style="color:#2424ff">:=</span><span style="color:#2424ff">(</span><span style="color:#16167a">SHR</span><span style="color:#2424ff">(</span><span style="color:#16167a">COM_CRC_Data</span><span style="color:#2424ff">,</span><span style="color:#800080">1</span><span style="color:#2424ff">)</span><span style="color:#2424ff">)</span><span style="color:#2424ff">;</span></div><div class="t" style="left:0px;top:230px;width:24px;text-align:right;font-family:'Liberation Mono',monospace;font-size:13.33px;line-height:19px;-webkit-text-stroke:0.25px currentColor;-webkit-text-stroke:0;color:#000">16</div><div class="t" style="left:160px;top:230px;font-family:'Liberation Mono',monospace;font-size:13.33px;line-height:19px;-webkit-text-stroke:0.25px currentColor"><b style="color:#0000ff">END_IF</b><span style="color:#2424ff">;</span></div><div class="t" style="left:0px;top:249px;width:24px;text-align:right;font-family:'Liberation Mono',monospace;font-size:13.33px;line-height:19px;-webkit-text-stroke:0.25px currentColor;-webkit-text-stroke:0;color:#000">17</div><div class="t" style="left:128px;top:249px;font-family:'Liberation Mono',monospace;font-size:13.33px;line-height:19px;-webkit-text-stroke:0.25px currentColor"><b style="color:#0000ff">END_FOR</b><span style="color:#2424ff">;</span></div><div class="t" style="left:0px;top:268px;width:24px;text-align:right;font-family:'Liberation Mono',monospace;font-size:13.33px;line-height:19px;-webkit-text-stroke:0.25px currentColor;-webkit-text-stroke:0;color:#000">18</div><div class="t" style="left:128px;top:268px;font-family:'Liberation Mono',monospace;font-size:13.33px;line-height:19px;-webkit-text-stroke:0.25px currentColor"><span style="color:#16167a">TempCount</span><span style="color:#2424ff">:=</span><span style="color:#2424ff">(</span><span style="color:#16167a">TempCount</span> <span style="color:#2424ff">+</span> <span style="color:#800080">1</span><span style="color:#2424ff">)</span><span style="color:#2424ff">;</span></div><div class="t" style="left:0px;top:287px;width:24px;text-align:right;font-family:'Liberation Mono',monospace;font-size:13.33px;line-height:19px;-webkit-text-stroke:0.25px currentColor;-webkit-text-stroke:0;color:#000">19</div><div class="t" style="left:128px;top:287px;font-family:'Liberation Mono',monospace;font-size:13.33px;line-height:19px;-webkit-text-stroke:0.25px currentColor"><b style="color:#0000ff">IF</b> <span style="color:#2424ff">(</span><span style="color:#16167a">TempCount</span> <span style="color:#2424ff">&gt;=</span> <span style="color:#16167a">xDataCount</span><span style="color:#2424ff">)</span> <b style="color:#0000ff">THEN</b></div><div class="t" style="left:0px;top:306px;width:24px;text-align:right;font-family:'Liberation Mono',monospace;font-size:13.33px;line-height:19px;-webkit-text-stroke:0.25px currentColor;-webkit-text-stroke:0;color:#000">20</div><div class="t" style="left:160px;top:306px;font-family:'Liberation Mono',monospace;font-size:13.33px;line-height:19px;-webkit-text-stroke:0.25px currentColor"><b style="color:#0000ff">EXIT</b><span style="color:#2424ff">;</span></div><div class="t" style="left:0px;top:325px;width:24px;text-align:right;font-family:'Liberation Mono',monospace;font-size:13.33px;line-height:19px;-webkit-text-stroke:0.25px currentColor;-webkit-text-stroke:0;color:#000">21</div><div class="t" style="left:128px;top:325px;font-family:'Liberation Mono',monospace;font-size:13.33px;line-height:19px;-webkit-text-stroke:0.25px currentColor"><b style="color:#0000ff">END_IF</b><span style="color:#2424ff">;</span></div><div class="t" style="left:0px;top:344px;width:24px;text-align:right;font-family:'Liberation Mono',monospace;font-size:13.33px;line-height:19px;-webkit-text-stroke:0.25px currentColor;-webkit-text-stroke:0;color:#000">22</div><div class="t" style="left:64px;top:344px;font-family:'Liberation Mono',monospace;font-size:13.33px;line-height:19px;-webkit-text-stroke:0.25px currentColor"></div><div class="t" style="left:0px;top:363px;width:24px;text-align:right;font-family:'Liberation Mono',monospace;font-size:13.33px;line-height:19px;-webkit-text-stroke:0.25px currentColor;-webkit-text-stroke:0;color:#000">23</div><div class="t" style="left:128px;top:363px;font-family:'Liberation Mono',monospace;font-size:13.33px;line-height:19px;-webkit-text-stroke:0.25px currentColor"><span style="color:#16167a">COM_Temp_Data</span><span style="color:#2424ff">:=</span><span style="color:#2424ff">(</span><span style="color:#2424ff">(</span><span style="color:#16167a">SHR</span><span style="color:#2424ff">(</span><span style="color:#16167a">xDataBuf</span><span style="color:#2424ff">[</span><span style="color:#16167a">II</span><span style="color:#2424ff">]</span><span style="color:#2424ff">,</span><span style="color:#800080">8</span><span style="color:#2424ff">)</span><span style="color:#2424ff">)</span> <b style="color:#0000ff">AND</b> <span style="color:#800080">16#00FF</span><span style="color:#2424ff">)</span><span style="color:#2424ff">;</span></div><div class="t" style="left:0px;top:382px;width:24px;text-align:right;font-family:'Liberation Mono',monospace;font-size:13.33px;line-height:19px;-webkit-text-stroke:0.25px currentColor;-webkit-text-stroke:0;color:#000">24</div><div class="t" style="left:128px;top:382px;font-family:'Liberation Mono',monospace;font-size:13.33px;line-height:19px;-webkit-text-stroke:0.25px currentColor"><span style="color:#16167a">COM_CRC_Data</span><span style="color:#2424ff">:=</span><span style="color:#2424ff">(</span><span style="color:#16167a">COM_CRC_Data</span> <b style="color:#0000ff">XOR</b> <span style="color:#16167a">COM_Temp_Data</span><span style="color:#2424ff">)</span><span style="color:#2424ff">;</span></div><div class="t" style="left:0px;top:401px;width:24px;text-align:right;font-family:'Liberation Mono',monospace;font-size:13.33px;line-height:19px;-webkit-text-stroke:0.25px currentColor;-webkit-text-stroke:0;color:#000">25</div><div class="t" style="left:128px;top:401px;font-family:'Liberation Mono',monospace;font-size:13.33px;line-height:19px;-webkit-text-stroke:0.25px currentColor"><b style="color:#0000ff">FOR</b> <span style="color:#16167a">JJ</span><span style="color:#2424ff">:=</span><span style="color:#800080">0</span> <b style="color:#0000ff">TO</b> <span style="color:#800080">7</span> <b style="color:#0000ff">BY</b> <span style="color:#800080">1</span> <b style="color:#0000ff">DO</b></div><div class="t" style="left:0px;top:420px;width:24px;text-align:right;font-family:'Liberation Mono',monospace;font-size:13.33px;line-height:19px;-webkit-text-stroke:0.25px currentColor;-webkit-text-stroke:0;color:#000">26</div><div class="t" style="left:160px;top:420px;font-family:'Liberation Mono',monospace;font-size:13.33px;line-height:19px;-webkit-text-stroke:0.25px currentColor"><b style="color:#0000ff">IF</b> <span style="color:#2424ff">(</span><span style="color:#2424ff">(</span><span style="color:#16167a">COM_CRC_Data</span> <b style="color:#0000ff">AND</b> <span style="color:#800080">16#0001</span><span style="color:#2424ff">)</span><span style="color:#2424ff">=</span><span style="color:#800080">16#0001</span><span style="color:#2424ff">)</span> <b style="color:#0000ff">THEN</b></div><div class="t" style="left:0px;top:439px;width:24px;text-align:right;font-family:'Liberation Mono',monospace;font-size:13.33px;line-height:19px;-webkit-text-stroke:0.25px currentColor;-webkit-text-stroke:0;color:#000">27</div><div class="t" style="left:192px;top:439px;font-family:'Liberation Mono',monospace;font-size:13.33px;line-height:19px;-webkit-text-stroke:0.25px currentColor"><span style="color:#16167a">COM_CRC_Data</span><span style="color:#2424ff">:=</span><span style="color:#2424ff">(</span><span style="color:#16167a">SHR</span><span style="color:#2424ff">(</span><span style="color:#16167a">COM_CRC_Data</span><span style="color:#2424ff">,</span><span style="color:#800080">1</span><span style="color:#2424ff">)</span><span style="color:#2424ff">)</span><span style="color:#2424ff">;</span></div><div class="t" style="left:0px;top:458px;width:24px;text-align:right;font-family:'Liberation Mono',monospace;font-size:13.33px;line-height:19px;-webkit-text-stroke:0.25px currentColor;-webkit-text-stroke:0;color:#000">28</div><div class="t" style="left:192px;top:458px;font-family:'Liberation Mono',monospace;font-size:13.33px;line-height:19px;-webkit-text-stroke:0.25px currentColor"><span style="color:#16167a">COM_CRC_Data</span><span style="color:#2424ff">:=</span><span style="color:#2424ff">(</span><span style="color:#16167a">COM_CRC_Data</span> <b style="color:#0000ff">XOR</b> <span style="color:#800080">16#A001</span><span style="color:#2424ff">)</span><span style="color:#2424ff">;</span></div><div class="a" style="left:53px;top:15px;width:1px;height:475px;background:#000"></div><div class="a" style="left:46px;top:287px;width:15px;height:15px;background:#a8c8f8;border:1px solid #000"></div><div class="a" style="left:48px;top:294px;width:11px;height:1px;background:#000"></div><div class="a" style="left:46px;top:1px;width:15px;height:15px;background:#a8c8f8;border:1px solid #000"></div><div class="a" style="left:48px;top:8px;width:11px;height:1px;background:#000"></div><div class="a" style="left:46px;top:419px;width:15px;height:15px;background:#a8c8f8;border:1px solid #000"></div><div class="a" style="left:48px;top:426px;width:11px;height:1px;background:#000"></div><div class="a" style="left:46px;top:59px;width:15px;height:15px;background:#a8c8f8;border:1px solid #000"></div><div class="a" style="left:48px;top:66px;width:11px;height:1px;background:#000"></div><div class="a" style="left:46px;top:401px;width:15px;height:15px;background:#a8c8f8;border:1px solid #000"></div><div class="a" style="left:48px;top:408px;width:11px;height:1px;background:#000"></div><div class="a" style="left:46px;top:115px;width:15px;height:15px;background:#a8c8f8;border:1px solid #000"></div><div class="a" style="left:48px;top:122px;width:11px;height:1px;background:#000"></div><div class="a" style="left:46px;top:135px;width:15px;height:15px;background:#a8c8f8;border:1px solid #000"></div><div class="a" style="left:48px;top:142px;width:11px;height:1px;background:#000"></div><div class="a" style="left:53px;top:236px;width:8px;height:1px;background:#000"></div><div class="a" style="left:53px;top:255px;width:8px;height:1px;background:#000"></div><div class="a" style="left:53px;top:331px;width:8px;height:1px;background:#000"></div></div><div class="a" style="left:1358px;top:138px;width:1px;height:543px;background:#a0a0a0"></div><div class="t" style="left:1114px;top:117px;">工具箱</div><svg style="left:1329px;top:121px" width="9" height="9" viewBox="0 0 9 9"><path d="M2 0.5H7M2.5 0.5V5M6.5 0.5V5M5.5 0.5V5M1 5H8M4.5 5V9" stroke="#000" stroke-width="1" fill="none"/></svg><svg style="left:1346px;top:121px" width="9" height="8" viewBox="0 0 9 8"><path d="M0.5 0.5L8.5 7.5M8.5 0.5L0.5 7.5" stroke="#000" stroke-width="1.5" fill="none"/></svg><div class="a" style="left:1111px;top:138px;width:201px;height:22px;background:#fff;border:1px solid #a0a0a0;border-top:2px solid #7a7a7a;border-left:2px solid #7a7a7a"></div><svg style="left:1298px;top:146px" width="10" height="6" viewBox="0 0 10 6"><path d="M0.5 0.5L5 5L9.5 0.5" stroke="#555" stroke-width="1.1" fill="none"/></svg><div class="a" style="left:1315px;top:140px;width:41px;height:21px;background:#e1e1e1;border:1px solid #adadad"></div><div class="t" style="left:1323px;top:144px;font-size:12px">搜索</div><div class="a" style="left:1111px;top:167px;width:246px;height:438px;background:#fff;border:1px solid #828790"></div><div class="a" style="left:1125px;top:182px;width:1px;height:332px;background:repeating-linear-gradient(to bottom,#a0a0a0 0 1px,transparent 1px 2px)"></div><div class="a" style="left:1144px;top:182px;width:1px;height:28px;background:repeating-linear-gradient(to bottom,#a0a0a0 0 1px,transparent 1px 2px)"></div><div class="a" style="left:1144px;top:230px;width:1px;height:28px;background:repeating-linear-gradient(to bottom,#a0a0a0 0 1px,transparent 1px 2px)"></div><div class="a" style="left:1144px;top:278px;width:1px;height:28px;background:repeating-linear-gradient(to bottom,#a0a0a0 0 1px,transparent 1px 2px)"></div><div class="a" style="left:1144px;top:326px;width:1px;height:140px;background:repeating-linear-gradient(to bottom,#a0a0a0 0 1px,transparent 1px 2px)"></div><div class="a" style="left:1125px;top:177px;width:9px;height:1px;background:repeating-linear-gradient(to right,#a0a0a0 0 1px,transparent 1px 2px)"></div><svg style="left:1121px;top:173px" width="9" height="9" viewBox="0 0 9 9"><rect x="0.5" y="0.5" width="8" height="8" rx="1" fill="#f4f4f4" stroke="#9a9a9a"/><path d="M2 4.5H7" stroke="#3c5a9a" stroke-width="1"/></svg><div class="t" style="left:1136px;top:170px;font-size:12px"><span style="font-size:11px">EtherCAT Devices</span></div><div class="a" style="left:1144px;top:193px;width:9px;height:1px;background:repeating-linear-gradient(to right,#a0a0a0 0 1px,transparent 1px 2px)"></div><svg style="left:1140px;top:189px" width="9" height="9" viewBox="0 0 9 9"><rect x="0.5" y="0.5" width="8" height="8" rx="1" fill="#f4f4f4" stroke="#9a9a9a"/><path d="M2 4.5H7M4.5 2V7" stroke="#3c5a9a" stroke-width="1"/></svg><div class="t" style="left:1155px;top:186px;font-size:12px"><span style="font-size:11px">Inovance Devices</span></div><div class="a" style="left:1144px;top:209px;width:9px;height:1px;background:repeating-linear-gradient(to right,#a0a0a0 0 1px,transparent 1px 2px)"></div><div class="t" style="left:1155px;top:202px;font-size:12px"><span style="font-size:11px">Other Devices</span></div><div class="a" style="left:1125px;top:225px;width:9px;height:1px;background:repeating-linear-gradient(to right,#a0a0a0 0 1px,transparent 1px 2px)"></div><svg style="left:1121px;top:221px" width="9" height="9" viewBox="0 0 9 9"><rect x="0.5" y="0.5" width="8" height="8" rx="1" fill="#f4f4f4" stroke="#9a9a9a"/><path d="M2 4.5H7" stroke="#3c5a9a" stroke-width="1"/></svg><div class="t" style="left:1136px;top:218px;font-size:12px">扩展模块</div><div class="a" style="left:1144px;top:241px;width:9px;height:1px;background:repeating-linear-gradient(to right,#a0a0a0 0 1px,transparent 1px 2px)"></div><svg style="left:1140px;top:237px" width="9" height="9" viewBox="0 0 9 9"><rect x="0.5" y="0.5" width="8" height="8" rx="1" fill="#f4f4f4" stroke="#9a9a9a"/><path d="M2 4.5H7M4.5 2V7" stroke="#3c5a9a" stroke-width="1"/></svg><div class="t" style="left:1155px;top:234px;font-size:12px">本地模块</div><div class="a" style="left:1144px;top:257px;width:9px;height:1px;background:repeating-linear-gradient(to right,#a0a0a0 0 1px,transparent 1px 2px)"></div><svg style="left:1140px;top:253px" width="9" height="9" viewBox="0 0 9 9"><rect x="0.5" y="0.5" width="8" height="8" rx="1" fill="#f4f4f4" stroke="#9a9a9a"/><path d="M2 4.5H7M4.5 2V7" stroke="#3c5a9a" stroke-width="1"/></svg><div class="t" style="left:1155px;top:250px;font-size:12px">扩展卡</div><div class="a" style="left:1125px;top:273px;width:9px;height:1px;background:repeating-linear-gradient(to right,#a0a0a0 0 1px,transparent 1px 2px)"></div><svg style="left:1121px;top:269px" width="9" height="9" viewBox="0 0 9 9"><rect x="0.5" y="0.5" width="8" height="8" rx="1" fill="#f4f4f4" stroke="#9a9a9a"/><path d="M2 4.5H7" stroke="#3c5a9a" stroke-width="1"/></svg><div class="t" style="left:1136px;top:266px;font-size:12px"><span style="font-size:11px">EtherNet/IP Devices</span></div><div class="a" style="left:1144px;top:289px;width:9px;height:1px;background:repeating-linear-gradient(to right,#a0a0a0 0 1px,transparent 1px 2px)"></div><svg style="left:1140px;top:285px" width="9" height="9" viewBox="0 0 9 9"><rect x="0.5" y="0.5" width="8" height="8" rx="1" fill="#f4f4f4" stroke="#9a9a9a"/><path d="M2 4.5H7M4.5 2V7" stroke="#3c5a9a" stroke-width="1"/></svg><div class="t" style="left:1155px;top:282px;font-size:12px"><span style="font-size:11px">Inovance Devices</span></div><div class="a" style="left:1144px;top:305px;width:9px;height:1px;background:repeating-linear-gradient(to right,#a0a0a0 0 1px,transparent 1px 2px)"></div><svg style="left:1140px;top:301px" width="9" height="9" viewBox="0 0 9 9"><rect x="0.5" y="0.5" width="8" height="8" rx="1" fill="#f4f4f4" stroke="#9a9a9a"/><path d="M2 4.5H7M4.5 2V7" stroke="#3c5a9a" stroke-width="1"/></svg><div class="t" style="left:1155px;top:298px;font-size:12px"><span style="font-size:11px">Other Devices</span></div><div class="a" style="left:1125px;top:321px;width:9px;height:1px;background:repeating-linear-gradient(to right,#a0a0a0 0 1px,transparent 1px 2px)"></div><svg style="left:1121px;top:317px" width="9" height="9" viewBox="0 0 9 9"><rect x="0.5" y="0.5" width="8" height="8" rx="1" fill="#f4f4f4" stroke="#9a9a9a"/><path d="M2 4.5H7" stroke="#3c5a9a" stroke-width="1"/></svg><div class="t" style="left:1136px;top:314px;font-size:12px">指令集</div><div class="a" style="left:1144px;top:337px;width:9px;height:1px;background:repeating-linear-gradient(to right,#a0a0a0 0 1px,transparent 1px 2px)"></div><svg style="left:1140px;top:333px" width="9" height="9" viewBox="0 0 9 9"><rect x="0.5" y="0.5" width="8" height="8" rx="1" fill="#f4f4f4" stroke="#9a9a9a"/><path d="M2 4.5H7M4.5 2V7" stroke="#3c5a9a" stroke-width="1"/></svg><div class="t" style="left:1155px;top:330px;font-size:12px">程序逻辑指令</div><div class="a" style="left:1144px;top:353px;width:9px;height:1px;background:repeating-linear-gradient(to right,#a0a0a0 0 1px,transparent 1px 2px)"></div><svg style="left:1140px;top:349px" width="9" height="9" viewBox="0 0 9 9"><rect x="0.5" y="0.5" width="8" height="8" rx="1" fill="#f4f4f4" stroke="#9a9a9a"/><path d="M2 4.5H7M4.5 2V7" stroke="#3c5a9a" stroke-width="1"/></svg><div class="t" style="left:1155px;top:346px;font-size:12px">流程控制指令</div><div class="a" style="left:1144px;top:369px;width:9px;height:1px;background:repeating-linear-gradient(to right,#a0a0a0 0 1px,transparent 1px 2px)"></div><svg style="left:1140px;top:365px" width="9" height="9" viewBox="0 0 9 9"><rect x="0.5" y="0.5" width="8" height="8" rx="1" fill="#f4f4f4" stroke="#9a9a9a"/><path d="M2 4.5H7M4.5 2V7" stroke="#3c5a9a" stroke-width="1"/></svg><div class="t" style="left:1155px;top:362px;font-size:12px">数据运算指令</div><div class="a" style="left:1144px;top:385px;width:9px;height:1px;background:repeating-linear-gradient(to right,#a0a0a0 0 1px,transparent 1px 2px)"></div><svg style="left:1140px;top:381px" width="9" height="9" viewBox="0 0 9 9"><rect x="0.5" y="0.5" width="8" height="8" rx="1" fill="#f4f4f4" stroke="#9a9a9a"/><path d="M2 4.5H7M4.5 2V7" stroke="#3c5a9a" stroke-width="1"/></svg><div class="t" style="left:1155px;top:378px;font-size:12px">数据处理指令</div><div class="a" style="left:1144px;top:401px;width:9px;height:1px;background:repeating-linear-gradient(to right,#a0a0a0 0 1px,transparent 1px 2px)"></div><svg style="left:1140px;top:397px" width="9" height="9" viewBox="0 0 9 9"><rect x="0.5" y="0.5" width="8" height="8" rx="1" fill="#f4f4f4" stroke="#9a9a9a"/><path d="M2 4.5H7M4.5 2V7" stroke="#3c5a9a" stroke-width="1"/></svg><div class="t" style="left:1155px;top:394px;font-size:12px">选择</div><div class="a" style="left:1144px;top:417px;width:9px;height:1px;background:repeating-linear-gradient(to right,#a0a0a0 0 1px,transparent 1px 2px)"></div><svg style="left:1140px;top:413px" width="9" height="9" viewBox="0 0 9 9"><rect x="0.5" y="0.5" width="8" height="8" rx="1" fill="#f4f4f4" stroke="#9a9a9a"/><path d="M2 4.5H7M4.5 2V7" stroke="#3c5a9a" stroke-width="1"/></svg><div class="t" style="left:1155px;top:410px;font-size:12px"><span style="font-size:11px">MC</span>轴控<span style="font-size:11px">(EtherCAT&amp;</span>脉冲输出<span style="font-size:11px">)</span></div><div class="a" style="left:1144px;top:433px;width:9px;height:1px;background:repeating-linear-gradient(to right,#a0a0a0 0 1px,transparent 1px 2px)"></div><svg style="left:1140px;top:429px" width="9" height="9" viewBox="0 0 9 9"><rect x="0.5" y="0.5" width="8" height="8" rx="1" fill="#f4f4f4" stroke="#9a9a9a"/><path d="M2 4.5H7M4.5 2V7" stroke="#3c5a9a" stroke-width="1"/></svg><div class="t" style="left:1155px;top:426px;font-size:12px"><span style="font-size:11px">HC</span>轴控<span style="font-size:11px">(</span>脉冲输入<span style="font-size:11px">)</span></div><div class="a" style="left:1144px;top:449px;width:9px;height:1px;background:repeating-linear-gradient(to right,#a0a0a0 0 1px,transparent 1px 2px)"></div><svg style="left:1140px;top:445px" width="9" height="9" viewBox="0 0 9 9"><rect x="0.5" y="0.5" width="8" height="8" rx="1" fill="#f4f4f4" stroke="#9a9a9a"/><path d="M2 4.5H7M4.5 2V7" stroke="#3c5a9a" stroke-width="1"/></svg><div class="t" style="left:1155px;top:442px;font-size:12px">定时器指令</div><div class="a" style="left:1144px;top:465px;width:9px;height:1px;background:repeating-linear-gradient(to right,#a0a0a0 0 1px,transparent 1px 2px)"></div><svg style="left:1140px;top:461px" width="9" height="9" viewBox="0 0 9 9"><rect x="0.5" y="0.5" width="8" height="8" rx="1" fill="#f4f4f4" stroke="#9a9a9a"/><path d="M2 4.5H7M4.5 2V7" stroke="#3c5a9a" stroke-width="1"/></svg><div class="t" style="left:1155px;top:458px;font-size:12px">通讯指令</div><div class="a" style="left:1125px;top:481px;width:9px;height:1px;background:repeating-linear-gradient(to right,#a0a0a0 0 1px,transparent 1px 2px)"></div><svg style="left:1121px;top:477px" width="9" height="9" viewBox="0 0 9 9"><rect x="0.5" y="0.5" width="8" height="8" rx="1" fill="#f4f4f4" stroke="#9a9a9a"/><path d="M2 4.5H7M4.5 2V7" stroke="#3c5a9a" stroke-width="1"/></svg><div class="t" style="left:1136px;top:474px;font-size:12px"><span style="font-size:11px">FB</span></div><div class="a" style="left:1125px;top:497px;width:9px;height:1px;background:repeating-linear-gradient(to right,#a0a0a0 0 1px,transparent 1px 2px)"></div><div class="t" style="left:1136px;top:490px;font-size:12px"><span style="font-size:11px">FC</span></div><div class="a" style="left:1125px;top:513px;width:9px;height:1px;background:repeating-linear-gradient(to right,#a0a0a0 0 1px,transparent 1px 2px)"></div><svg style="left:1121px;top:509px" width="9" height="9" viewBox="0 0 9 9"><rect x="0.5" y="0.5" width="8" height="8" rx="1" fill="#f4f4f4" stroke="#9a9a9a"/><path d="M2 4.5H7M4.5 2V7" stroke="#3c5a9a" stroke-width="1"/></svg><div class="t" style="left:1136px;top:506px;font-size:12px">库</div><div class="a" style="left:1111px;top:611px;width:246px;height:70px;border:1px solid #a0a0a0;border-right-color:#fff;border-bottom-color:#fff"></div><div class="a" style="left:1112px;top:612px;width:244px;height:68px;border:1px solid #fff;border-right-color:#c8c8c8;border-bottom-color:#c8c8c8"></div><div class="t" style="left:1117px;top:613px;color:#6d6d6d">显示选中信息!</div><div class="t" style="left:4px;top:690px;">信息输出窗口</div><svg style="left:1329px;top:694px" width="9" height="9" viewBox="0 0 9 9"><path d="M2 0.5H7M2.5 0.5V5M6.5 0.5V5M5.5 0.5V5M1 5H8M4.5 5V9" stroke="#000" stroke-width="1" fill="none"/></svg><svg style="left:1346px;top:694px" width="9" height="8" viewBox="0 0 9 8"><path d="M0.5 0.5L8.5 7.5M8.5 0.5L0.5 7.5" stroke="#000" stroke-width="1.5" fill="none"/></svg><div class="t" style="left:4px;top:710px;">就绪</div><div class="a" style="left:1174px;top:707px;width:29px;height:21px;border:1px solid #a0a0a0;border-right-color:#fff;border-bottom:none"></div><div class="t" style="left:1177px;top:711px;">插入</div><div class="a" style="left:1206px;top:707px;width:153px;height:21px;border:1px solid #a0a0a0;border-right-color:#fff;border-bottom:none"></div><div class="t" style="left:1208px;top:711px;">行:</div><div class="t" style="left:1238px;top:711px;">1,</div><div class="t" style="left:1252px;top:711px;">列:</div><div class="t" style="left:1284px;top:711px;">1</div></body></html>
